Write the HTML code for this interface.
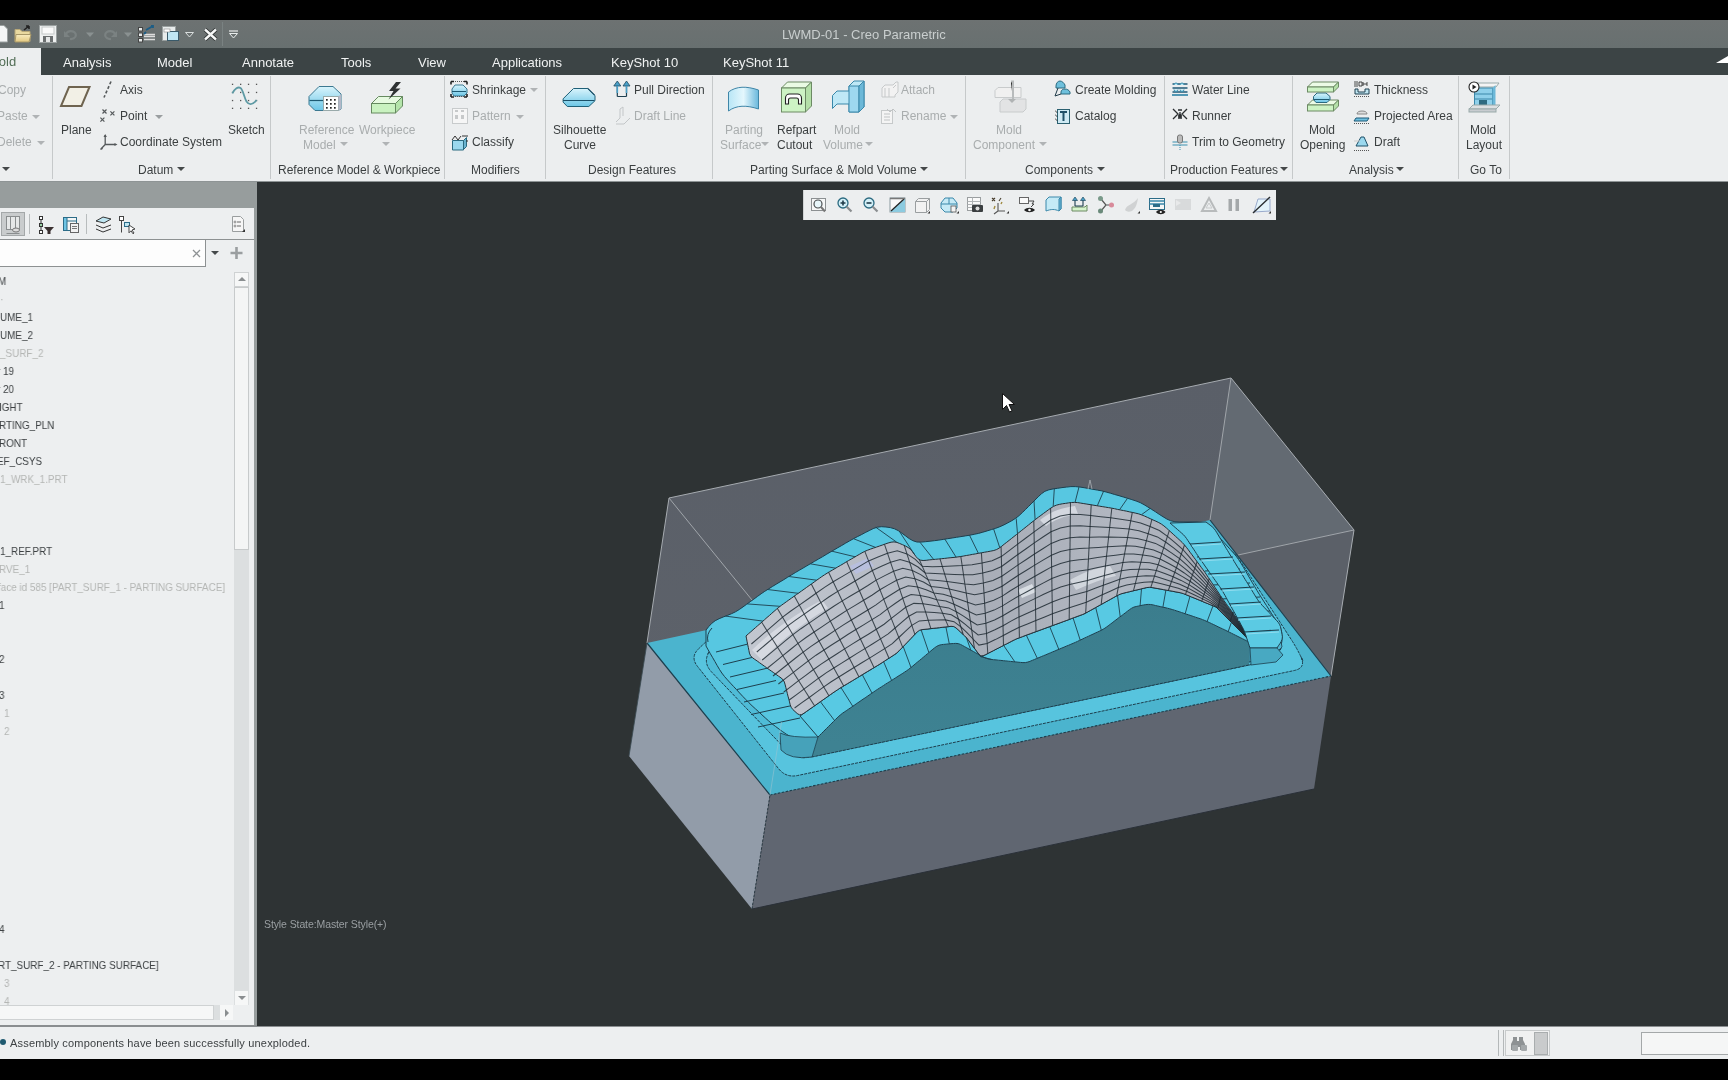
<!DOCTYPE html>
<html><head><meta charset="utf-8">
<style>
*{margin:0;padding:0;box-sizing:border-box}
html,body{width:1728px;height:1080px;overflow:hidden;background:#000;font-family:"Liberation Sans",sans-serif}
.a{position:absolute}
.t{will-change:transform;position:absolute;white-space:nowrap;font-size:12px;line-height:14px;color:#3b3f40}
.g{color:#a9adae}
.tab{position:absolute;white-space:nowrap;font-size:13px;line-height:16px;color:#f2f4f4;top:54px}
.sep{position:absolute;width:1px;background:#c9cccc;top:80px;height:98px}
.tr{position:absolute;white-space:nowrap;font-size:11px;line-height:13px;color:#3a3e40;left:0}
.tg{color:#b3b5b3}
#qat{left:0;top:20px;width:1728px;height:28px;background:linear-gradient(#6d7272,#687070)}
#tabs{left:0;top:48px;width:1728px;height:27px;background:#3c4445}
#ribbon{left:0;top:75px;width:1728px;height:107px;background:#eceeef}
#lhead{left:0;top:182px;width:257px;height:26px;background:#979d9d}
#lpanel{left:0;top:208px;width:254px;height:818px;background:#edeff0}
#lborder{left:254px;top:208px;width:3px;height:818px;background:#979d9d}
#vp{left:257px;top:182px;width:1471px;height:844px;background:#2e3334}
#status{left:0;top:1026px;width:1728px;height:33px;background:#edeff0}
</style></head>
<body>
<div id="qat" class="a"></div>
<div id="tabs" class="a"></div>
<div id="ribbon" class="a"></div>
<div id="lhead" class="a"></div>
<div class="a" style="left:0;top:181px;width:1728px;height:1px;background:#8e9495"></div>
<div id="lpanel" class="a"></div>
<div id="lborder" class="a"></div>
<div id="vp" class="a"></div>
<div id="status" class="a"></div>
<!--MODEL--><svg class="a" style="left:0;top:0" width="1728" height="1080" viewBox="0 0 1728 1080">
<defs><clipPath id="vpc"><rect x="257" y="181" width="1471" height="845"/></clipPath>
<linearGradient id="mg" x1="740" y1="0" x2="1250" y2="0" gradientUnits="userSpaceOnUse">
<stop offset="0" stop-color="#c2c7d0"/><stop offset="0.3" stop-color="#b6bbc5"/><stop offset="0.5" stop-color="#a9aeb8"/><stop offset="0.75" stop-color="#b2b7c1"/><stop offset="1" stop-color="#a0a5af"/></linearGradient>
<linearGradient id="wg" x1="0" y1="600" x2="0" y2="745" gradientUnits="userSpaceOnUse"><stop offset="0" stop-color="#3b7d8d"/><stop offset="1" stop-color="#3e8292"/></linearGradient>
<linearGradient id="bg" x1="0" y1="378" x2="0" y2="700" gradientUnits="userSpaceOnUse"><stop offset="0" stop-color="#5a5f68"/><stop offset="1" stop-color="#5d626a"/></linearGradient>
</defs>
<g clip-path="url(#vpc)">
<polygon points="669.0,498.0 1231.0,378.0 1354.0,530.0 1331.0,676.0 770.0,795.0 647.0,643.0" fill="url(#bg)"/>
<polygon points="1231.0,378.0 1354.0,530.0 1238.0,555.0 1210.0,520.0" fill="#636a72"/>
<polygon points="1238.0,555.0 1354.0,530.0 1331.0,676.0 1300.0,633.0" fill="#5b6068"/>
<polygon points="647.0,643.0 770.0,795.0 752.0,909.0 629.0,756.0" fill="#929ca9"/>
<polygon points="770.0,795.0 1331.0,676.0 1314.0,789.0 752.0,909.0" fill="#606671"/>
<polygon points="647.0,643.0 1210.0,520.0 1331.0,676.0 770.0,795.0" fill="#4bb4ce"/>
<polyline points="647.0,643.0 669.0,498.0 1231.0,378.0 1354.0,530.0 1331.0,676.0" fill="none" stroke="#a6abb0" stroke-width="1"/>
<line x1="1231" y1="378" x2="1210" y2="520" stroke="#a0a5aa" stroke-width="1"/>
<line x1="669" y1="498" x2="752" y2="600" stroke="#a0a5aa" stroke-width="1"/>
<line x1="1238" y1="555" x2="1354" y2="530" stroke="#a0a5aa" stroke-width="1"/>
<polyline points="770.0,795.0 1331.0,676.0" fill="none" stroke="#1d3f4e" stroke-width="1.1" stroke-dasharray="2.5,1.5"/>
<polyline points="1331.0,676.0 1210.0,520.0" fill="none" stroke="#1d3f4e" stroke-width="1.2"/>
<polyline points="647.0,643.0 770.0,795.0" fill="none" stroke="#1d3f4e" stroke-width="1.2"/>
<polyline points="629.0,756.0 647.0,643.0" fill="none" stroke="#3a4a52" stroke-width="0.8"/>
<polyline points="752.0,909.0 770.0,795.0" fill="none" stroke="#2a3a44" stroke-width="1" stroke-dasharray="2.5,1.5"/>
<polyline points="752.0,909.0 1314.0,789.0" fill="none" stroke="#2a3038" stroke-width="1"/>
<path d="M723.8 634.0 Q712.0 636.0 703.3 644.3 L698.7 648.7 Q690.0 657.0 697.5 666.4 L778.5 768.6 Q786.0 778.0 797.7 775.5 L1294.3 670.5 Q1306.0 668.0 1301.1 657.0 L1302.9 661.0 Q1298.0 650.0 1291.5 639.9 L1238.5 558.1 Q1232.0 548.0 1220.2 550.0 Z" fill="#57c4de" stroke="#1d3f4e" stroke-width="1" stroke-dasharray="3,1"/>
<path d="M729.8 639.7 Q716.0 642.0 708.0 653.5 L710.0 650.5 Q702.0 662.0 711.7 672.1 L786.3 749.9 Q796.0 760.0 809.7 757.1 L1259.3 662.9 Q1273.0 660.0 1281.1 648.6 L1274.9 657.4 Q1283.0 646.0 1275.5 634.2 L1233.5 567.8 Q1226.0 556.0 1212.2 558.3 Z" fill="#4fbcd7" stroke="#1d3f4e" stroke-width="1" stroke-dasharray="3,1"/>
<polygon points="706.0,630.0 708.8,626.5 711.8,623.3 715.2,620.7 719.1,618.7 723.2,617.0 727.4,615.4 731.5,613.7 735.5,611.8 739.3,609.5 743.0,606.9 746.6,604.3 750.2,601.7 753.9,599.1 757.5,596.4 761.1,593.8 764.8,591.3 768.6,588.9 772.4,586.5 776.2,584.2 780.0,581.9 783.9,579.6 787.7,577.2 791.5,574.9 795.3,572.6 799.2,570.3 803.0,568.1 806.9,565.8 810.8,563.5 814.6,561.3 818.5,559.0 822.4,556.8 826.2,554.5 830.1,552.2 833.9,550.0 837.8,547.7 841.7,545.5 845.5,543.2 849.4,541.0 853.3,538.8 857.3,536.7 861.3,534.7 865.2,532.6 869.2,530.6 873.2,528.6 877.3,527.2 881.5,526.7 885.9,527.0 890.3,527.6 894.5,528.8 898.4,530.7 902.0,533.3 905.6,535.9 909.2,538.6 912.9,540.7 916.9,542.0 921.1,542.1 925.5,541.7 930.0,541.2 934.4,540.7 938.9,540.1 943.3,539.4 947.7,538.7 952.1,538.0 956.5,537.3 961.0,536.6 965.4,535.9 969.8,535.2 974.2,534.3 978.5,533.4 982.8,532.2 987.1,530.9 991.4,529.6 995.7,528.3 999.9,526.7 1003.9,524.9 1007.9,522.8 1011.8,520.7 1015.6,518.3 1019.1,515.6 1022.3,512.6 1025.5,509.5 1028.7,506.3 1031.9,503.1 1035.0,500.0 1038.2,496.8 1041.4,493.8 1044.9,491.3 1048.9,489.8 1053.2,488.9 1057.6,488.3 1062.0,487.6 1066.5,487.1 1070.9,486.6 1075.3,486.6 1079.7,487.0 1084.1,487.7 1088.6,488.5 1093.0,489.3 1097.4,490.1 1101.8,490.9 1106.1,492.0 1110.4,493.2 1114.7,494.5 1119.0,495.7 1123.3,497.0 1127.6,498.3 1131.8,499.6 1136.1,501.0 1140.2,502.6 1144.1,504.7 1147.9,507.0 1151.7,509.4 1155.5,511.8 1159.2,514.3 1163.0,516.7 1166.8,519.0 1170.7,520.8 1174.9,521.7 1179.3,522.0 1183.8,522.0 1188.2,522.0 1192.7,522.0 1197.1,522.1 1201.4,522.7 1205.2,524.2 1208.6,526.8 1211.8,529.8 1215.0,533.0 1218.1,536.2 1221.2,539.4 1224.2,542.7 1227.2,546.0 1230.2,549.4 1233.2,552.7 1236.1,556.1 1238.7,559.7 1241.1,563.5 1243.4,567.3 1245.7,571.2 1247.9,575.0 1250.1,578.9 1252.4,582.8 1254.7,586.6 1257.0,590.5 1259.3,594.3 1261.7,598.1 1264.1,601.9 1266.5,605.6 1268.9,609.4 1271.3,613.2 1273.7,616.9 1276.2,620.6 1278.6,624.4 1280.6,628.2 1281.6,632.4 1282.0,636.8 1281.9,641.2 1281.1,645.3 1279.3,649.0 1276.5,652.3 1273.0,654.9 1269.1,656.7 1264.9,658.0 1260.6,659.1 1256.2,660.2 1251.9,661.2 1247.5,662.2 1243.1,663.1 1238.7,663.9 1234.3,664.7 1229.9,665.5 1225.5,666.3 1221.1,667.1 1216.7,667.9 1212.3,668.7 1207.9,669.5 1203.5,670.3 1199.1,671.1 1194.7,671.8 1190.3,672.6 1185.9,673.4 1181.5,674.2 1177.1,675.0 1172.7,675.8 1168.3,676.6 1163.9,677.4 1159.5,678.2 1155.1,679.0 1150.7,679.8 1146.3,680.6 1141.9,681.4 1137.5,682.2 1133.1,683.0 1128.7,683.8 1124.3,684.6 1119.9,685.4 1115.5,686.2 1111.1,687.0 1106.7,687.8 1102.3,688.6 1097.9,689.4 1093.4,690.2 1089.0,691.0 1084.6,691.8 1080.2,692.6 1075.8,693.4 1071.4,694.2 1067.0,695.0 1062.6,695.8 1058.2,696.6 1053.8,697.4 1049.4,698.2 1045.0,699.0 1040.6,699.8 1036.2,700.6 1031.8,701.4 1027.4,702.2 1023.0,703.0 1018.6,703.8 1014.2,704.6 1009.8,705.4 1005.4,706.2 1001.0,707.0 996.6,707.8 992.2,708.6 987.8,709.4 983.4,710.2 979.0,711.0 974.6,711.8 970.2,712.6 965.8,713.4 961.4,714.2 957.0,715.0 952.6,715.8 948.2,716.6 943.8,717.4 939.4,718.2 935.0,719.0 930.6,719.8 926.2,720.6 921.8,721.4 917.4,722.2 912.9,723.0 908.5,723.8 904.1,724.6 899.7,725.4 895.3,726.2 890.9,727.0 886.5,727.8 882.1,728.6 877.7,729.4 873.3,730.1 868.9,730.9 864.5,731.7 860.1,732.5 855.7,733.3 851.3,734.1 846.9,734.9 842.5,735.7 838.1,736.5 833.7,737.3 829.3,738.1 824.9,738.9 820.5,739.7 816.1,740.5 811.7,741.1 807.3,741.2 803.0,740.5 798.7,739.4 794.4,738.1 790.3,736.5 786.5,734.3 782.8,731.8 779.2,729.2 775.6,726.5 772.0,723.8 768.6,720.9 765.3,717.9 762.0,714.9 758.7,711.8 755.4,708.8 752.1,705.8 748.9,702.7 745.8,699.5 742.7,696.3 739.6,693.0 736.6,689.7 733.5,686.4 730.5,683.2 727.5,679.9 724.5,676.5 721.8,673.0 719.4,669.3 717.1,665.4 714.9,661.5 712.7,657.7 710.4,653.8 708.2,649.9 706.0,646.0" fill="#57c7e1" stroke="#1d3f4e" stroke-width="1"/>
<line x1="716" y1="652.0" x2="752" y2="643.0" stroke="#1d3f4e" stroke-width="1"/>
<line x1="723" y1="664.5" x2="760" y2="655.5" stroke="#1d3f4e" stroke-width="1"/>
<line x1="730" y1="677.0" x2="768" y2="668.0" stroke="#1d3f4e" stroke-width="1"/>
<line x1="737" y1="689.5" x2="776" y2="680.5" stroke="#1d3f4e" stroke-width="1"/>
<line x1="744" y1="702.0" x2="784" y2="693.0" stroke="#1d3f4e" stroke-width="1"/>
<line x1="751" y1="714.5" x2="792" y2="705.5" stroke="#1d3f4e" stroke-width="1"/>
<line x1="758" y1="727.0" x2="800" y2="718.0" stroke="#1d3f4e" stroke-width="1"/>
<path d="M712 628q-6 6 -4 14" fill="none" stroke="#1d3f4e"/>
<line x1="1189" y1="543" x2="1220" y2="541" stroke="#1d3f4e" stroke-width="1.1"/>
<line x1="1197" y1="557" x2="1230" y2="555" stroke="#1d3f4e" stroke-width="1.1"/>
<line x1="1205" y1="571" x2="1240" y2="569" stroke="#1d3f4e" stroke-width="1.1"/>
<line x1="1213" y1="585" x2="1250" y2="583" stroke="#1d3f4e" stroke-width="1.1"/>
<line x1="1221" y1="599" x2="1260" y2="597" stroke="#1d3f4e" stroke-width="1.1"/>
<line x1="1229" y1="613" x2="1270" y2="611" stroke="#1d3f4e" stroke-width="1.1"/>
<line x1="1237" y1="627" x2="1280" y2="625" stroke="#1d3f4e" stroke-width="1.1"/>
<polygon points="1249.0,642.0 1280.0,636.0 1282.0,647.0 1273.0,656.0 1249.0,662.0" fill="#4fb4cf" stroke="#1d3f4e" stroke-width="0.8"/>
<polygon points="818.0,737.0 819.7,735.3 821.5,733.5 823.2,731.8 825.0,730.0 826.7,728.3 828.4,726.6 830.2,724.8 831.9,723.1 833.6,721.4 835.4,719.6 837.1,717.9 838.9,716.2 840.8,714.6 842.7,713.1 844.8,711.7 846.8,710.4 848.8,709.0 850.9,707.6 852.9,706.2 854.9,704.8 856.9,703.4 859.0,702.0 861.0,700.6 863.0,699.2 865.1,697.9 867.1,696.5 869.1,695.1 871.1,693.7 873.2,692.3 875.2,690.9 877.3,689.5 879.3,688.2 881.4,686.9 883.5,685.5 885.5,684.2 887.6,682.9 889.7,681.6 891.8,680.3 893.8,679.0 895.9,677.7 898.0,676.3 900.1,675.0 902.2,673.7 904.2,672.4 906.3,671.0 908.3,669.6 910.2,668.1 912.1,666.6 914.0,665.0 915.9,663.4 917.8,661.8 919.7,660.3 921.6,658.7 923.5,657.1 925.4,655.5 927.2,654.0 929.1,652.4 931.0,650.8 932.9,649.2 934.8,647.7 936.8,646.3 938.9,645.3 941.2,644.7 943.6,644.4 946.1,644.2 948.5,643.9 951.0,643.7 953.4,643.5 955.8,643.4 958.2,643.6 960.4,644.4 962.6,645.5 964.7,646.7 966.9,647.9 969.0,649.1 971.2,650.3 973.4,651.5 975.5,652.7 977.7,653.8 979.8,655.0 982.0,656.2 984.1,657.4 986.4,658.3 988.7,659.0 991.1,659.4 993.5,659.7 996.0,659.9 998.4,660.2 1000.9,660.4 1003.3,660.7 1005.7,660.9 1008.2,661.2 1010.6,661.4 1013.1,661.7 1015.5,661.9 1018.0,662.2 1020.4,662.4 1022.9,662.6 1025.3,662.6 1027.6,662.1 1029.9,661.4 1032.2,660.4 1034.4,659.5 1036.7,658.5 1039.0,657.6 1041.3,656.6 1043.5,655.7 1045.8,654.8 1048.1,653.8 1050.3,652.9 1052.6,651.9 1054.9,651.0 1057.1,650.0 1059.4,649.1 1061.7,648.1 1064.0,647.2 1066.2,646.2 1068.5,645.3 1070.8,644.3 1073.0,643.4 1075.3,642.4 1077.5,641.4 1079.7,640.3 1082.0,639.3 1084.2,638.2 1086.4,637.2 1088.6,636.2 1090.9,635.1 1093.1,634.1 1095.3,633.0 1097.6,632.0 1099.8,631.0 1102.0,629.9 1104.1,628.7 1106.2,627.3 1108.1,625.9 1110.1,624.4 1112.1,622.9 1114.0,621.4 1116.0,619.9 1117.9,618.4 1119.9,616.9 1121.9,615.5 1123.8,614.0 1125.8,612.5 1127.7,611.0 1129.7,609.5 1131.7,608.2 1133.9,607.1 1136.2,606.5 1138.6,606.0 1141.0,605.5 1143.4,605.0 1145.8,604.6 1148.2,604.4 1150.7,604.5 1153.1,604.9 1155.4,605.5 1157.8,606.0 1160.2,606.6 1162.6,607.1 1165.0,607.6 1167.4,608.2 1169.8,608.8 1172.2,609.5 1174.5,610.2 1176.9,611.0 1179.2,611.7 1181.5,612.5 1183.9,613.3 1186.2,614.1 1188.5,614.8 1190.9,615.6 1193.2,616.4 1195.5,617.2 1197.9,618.0 1200.2,618.7 1202.5,619.6 1204.8,620.5 1207.0,621.5 1209.3,622.5 1211.5,623.6 1213.7,624.6 1215.9,625.7 1218.1,626.8 1220.3,627.8 1222.6,628.9 1224.8,629.9 1227.0,631.0 1229.2,632.1 1231.4,633.2 1233.6,634.3 1235.8,635.4 1238.0,636.5 1240.2,637.6 1242.4,638.7 1244.6,639.8 1246.8,640.9 1249.0,642.0 1249.0,665.0 812.0,757.0" fill="url(#wg)"/>
<path d="M780 733Q790 738 818 737L812 757Q790 760 781 750Z" fill="#46a2ba" stroke="#1d3f4e" stroke-width="0.8"/>
<path d="M1249 665L812 757" stroke="#1d3f4e" stroke-width="1" stroke-dasharray="3,1"/>
<polygon points="818.0,737.0 819.7,735.3 821.5,733.5 823.2,731.8 825.0,730.0 826.7,728.3 828.4,726.6 830.2,724.8 831.9,723.1 833.6,721.4 835.4,719.6 837.1,717.9 838.9,716.2 840.8,714.6 842.7,713.1 844.8,711.7 846.8,710.4 848.8,709.0 850.9,707.6 852.9,706.2 854.9,704.8 856.9,703.4 859.0,702.0 861.0,700.6 863.0,699.2 865.1,697.9 867.1,696.5 869.1,695.1 871.1,693.7 873.2,692.3 875.2,690.9 877.3,689.5 879.3,688.2 881.4,686.9 883.5,685.5 885.5,684.2 887.6,682.9 889.7,681.6 891.8,680.3 893.8,679.0 895.9,677.7 898.0,676.3 900.1,675.0 902.2,673.7 904.2,672.4 906.3,671.0 908.3,669.6 910.2,668.1 912.1,666.6 914.0,665.0 915.9,663.4 917.8,661.8 919.7,660.3 921.6,658.7 923.5,657.1 925.4,655.5 927.2,654.0 929.1,652.4 931.0,650.8 932.9,649.2 934.8,647.7 936.8,646.3 938.9,645.3 941.2,644.7 943.6,644.4 946.1,644.2 948.5,643.9 951.0,643.7 953.4,643.5 955.8,643.4 958.2,643.6 960.4,644.4 962.6,645.5 964.7,646.7 966.9,647.9 969.0,649.1 971.2,650.3 973.4,651.5 975.5,652.7 977.7,653.8 979.8,655.0 982.0,656.2 984.1,657.4 986.4,658.3 988.7,659.0 991.1,659.4 993.5,659.7 996.0,659.9 998.4,660.2 1000.9,660.4 1003.3,660.7 1005.7,660.9 1008.2,661.2 1010.6,661.4 1013.1,661.7 1015.5,661.9 1018.0,662.2 1020.4,662.4 1022.9,662.6 1025.3,662.6 1027.6,662.1 1029.9,661.4 1032.2,660.4 1034.4,659.5 1036.7,658.5 1039.0,657.6 1041.3,656.6 1043.5,655.7 1045.8,654.8 1048.1,653.8 1050.3,652.9 1052.6,651.9 1054.9,651.0 1057.1,650.0 1059.4,649.1 1061.7,648.1 1064.0,647.2 1066.2,646.2 1068.5,645.3 1070.8,644.3 1073.0,643.4 1075.3,642.4 1077.5,641.4 1079.7,640.3 1082.0,639.3 1084.2,638.2 1086.4,637.2 1088.6,636.2 1090.9,635.1 1093.1,634.1 1095.3,633.0 1097.6,632.0 1099.8,631.0 1102.0,629.9 1104.1,628.7 1106.2,627.3 1108.1,625.9 1110.1,624.4 1112.1,622.9 1114.0,621.4 1116.0,619.9 1117.9,618.4 1119.9,616.9 1121.9,615.5 1123.8,614.0 1125.8,612.5 1127.7,611.0 1129.7,609.5 1131.7,608.2 1133.9,607.1 1136.2,606.5 1138.6,606.0 1141.0,605.5 1143.4,605.0 1145.8,604.6 1148.2,604.4 1150.7,604.5 1153.1,604.9 1155.4,605.5 1157.8,606.0 1160.2,606.6 1162.6,607.1 1165.0,607.6 1167.4,608.2 1169.8,608.8 1172.2,609.5 1174.5,610.2 1176.9,611.0 1179.2,611.7 1181.5,612.5 1183.9,613.3 1186.2,614.1 1188.5,614.8 1190.9,615.6 1193.2,616.4 1195.5,617.2 1197.9,618.0 1200.2,618.7 1202.5,619.6 1204.8,620.5 1207.0,621.5 1209.3,622.5 1211.5,623.6 1213.7,624.6 1215.9,625.7 1218.1,626.8 1220.3,627.8 1222.6,628.9 1224.8,629.9 1227.0,631.0 1229.2,632.1 1231.4,633.2 1233.6,634.3 1235.8,635.4 1238.0,636.5 1240.2,637.6 1242.4,638.7 1244.6,639.8 1246.8,640.9 1249.0,642.0 1249.0,640.0 1216.0,607.0 1182.0,593.0 1149.0,587.0 1120.0,594.0 1084.0,614.0 1016.0,639.0 981.0,657.0 966.0,637.0 954.0,626.0 919.0,630.0 897.0,653.0 880.0,664.0 837.0,690.0 800.0,716.0 818.0,737.0" fill="#58c9e3" stroke="#1d3f4e" stroke-width="1"/>
<polygon points="746.0,636.0 748.3,633.9 750.7,631.9 753.0,629.8 755.3,627.8 757.7,625.7 760.0,623.7 762.4,621.6 764.7,619.6 767.0,617.5 769.4,615.5 771.7,613.4 774.0,611.4 776.4,609.3 778.8,607.3 781.3,605.4 783.8,603.6 786.3,601.8 788.8,600.0 791.4,598.2 793.9,596.4 796.4,594.6 799.0,592.8 801.5,591.0 804.1,589.2 806.6,587.4 809.1,585.6 811.7,583.8 814.2,582.0 816.7,580.2 819.3,578.4 821.8,576.6 824.4,574.9 827.1,573.2 829.7,571.6 832.4,570.1 835.1,568.5 837.8,566.9 840.5,565.4 843.2,563.8 845.8,562.2 848.5,560.6 851.2,559.1 853.9,557.5 856.6,555.9 859.3,554.4 862.0,552.8 864.7,551.4 867.6,550.2 870.5,549.1 873.4,548.1 876.4,547.1 879.3,546.1 882.2,545.1 885.2,544.0 888.1,543.0 891.1,542.2 894.0,541.9 896.9,542.4 899.7,543.5 902.6,544.7 905.4,546.0 908.1,547.5 910.4,549.3 912.4,551.6 914.2,554.1 916.0,556.6 918.0,558.8 920.3,560.1 923.1,560.5 926.2,560.3 929.2,559.9 932.3,559.6 935.4,559.3 938.5,559.0 941.6,558.7 944.7,558.4 947.8,558.0 950.9,557.7 954.0,557.4 957.1,557.0 960.2,556.6 963.2,556.1 966.3,555.5 969.4,555.0 972.4,554.4 975.5,553.9 978.5,553.3 981.6,552.8 984.7,552.2 987.7,551.7 990.8,551.1 993.8,550.5 996.7,549.5 999.3,548.0 1001.8,546.2 1004.2,544.2 1006.7,542.3 1009.1,540.4 1011.6,538.4 1014.0,536.5 1016.4,534.6 1018.9,532.6 1021.3,530.7 1023.7,528.8 1026.2,526.8 1028.6,524.9 1031.0,522.9 1033.5,521.0 1035.9,519.1 1038.4,517.2 1040.9,515.4 1043.4,513.5 1045.9,511.7 1048.4,509.8 1051.0,508.0 1053.5,506.4 1056.3,505.2 1059.3,504.4 1062.3,503.8 1065.4,503.4 1068.5,502.9 1071.5,502.5 1074.6,502.4 1077.7,502.6 1080.7,503.1 1083.8,503.6 1086.9,504.1 1090.0,504.6 1093.0,505.1 1096.1,505.6 1099.2,506.1 1102.2,506.6 1105.3,507.1 1108.4,507.6 1111.4,508.1 1114.5,508.7 1117.5,509.4 1120.6,510.0 1123.6,510.6 1126.7,511.2 1129.7,511.9 1132.8,512.5 1135.8,513.2 1138.8,513.9 1141.7,514.9 1144.6,516.1 1147.5,517.4 1150.3,518.7 1153.1,520.0 1155.9,521.2 1158.8,522.6 1161.4,524.1 1163.9,525.9 1166.3,527.9 1168.6,530.0 1170.9,532.1 1173.2,534.2 1175.5,536.3 1177.8,538.4 1180.1,540.5 1182.3,542.6 1184.4,544.9 1186.4,547.3 1188.3,549.8 1190.1,552.3 1192.0,554.8 1193.8,557.3 1195.7,559.8 1197.5,562.3 1199.4,564.8 1201.2,567.3 1203.1,569.8 1204.9,572.3 1206.6,574.9 1208.3,577.5 1210.1,580.1 1211.8,582.7 1213.5,585.3 1215.2,587.8 1217.0,590.4 1218.7,593.0 1220.4,595.6 1222.2,598.2 1224.0,600.7 1225.8,603.2 1227.6,605.7 1229.5,608.3 1231.3,610.8 1233.1,613.3 1234.9,615.8 1236.7,618.4 1238.4,621.0 1240.0,623.7 1241.5,626.4 1243.0,629.1 1244.5,631.8 1246.0,634.5 1247.5,637.3 1249.0,640.0 1216.0,607.0 1213.3,605.9 1210.6,604.8 1207.9,603.7 1205.2,602.6 1202.5,601.5 1199.8,600.3 1197.1,599.2 1194.4,598.1 1191.7,597.0 1189.0,595.9 1186.3,594.8 1183.6,593.7 1180.9,592.9 1178.0,592.3 1175.2,591.8 1172.3,591.2 1169.4,590.7 1166.6,590.2 1163.7,589.7 1160.8,589.1 1157.9,588.6 1155.1,588.1 1152.2,587.6 1149.4,587.3 1146.5,587.6 1143.7,588.3 1140.8,589.0 1138.0,589.7 1135.2,590.3 1132.3,591.0 1129.5,591.7 1126.7,592.4 1123.8,593.1 1121.0,593.9 1118.4,595.0 1115.8,596.3 1113.3,597.7 1110.7,599.2 1108.2,600.6 1105.6,602.0 1103.1,603.4 1100.5,604.8 1098.0,606.2 1095.4,607.7 1092.9,609.1 1090.3,610.5 1087.8,611.9 1085.2,613.3 1082.6,614.5 1079.8,615.5 1077.1,616.5 1074.4,617.5 1071.6,618.5 1068.9,619.6 1066.2,620.6 1063.4,621.6 1060.7,622.6 1058.0,623.6 1055.2,624.6 1052.5,625.6 1049.7,626.6 1047.0,627.6 1044.3,628.6 1041.5,629.6 1038.8,630.6 1036.1,631.6 1033.3,632.6 1030.6,633.6 1027.9,634.6 1025.1,635.6 1022.4,636.7 1019.7,637.7 1016.9,638.7 1014.3,639.9 1011.7,641.2 1009.1,642.6 1006.5,643.9 1003.9,645.2 1001.3,646.6 998.7,647.9 996.1,649.2 993.5,650.6 990.9,651.9 988.4,653.2 985.8,654.6 983.2,655.7 980.9,655.9 979.0,654.3 977.2,652.0 975.5,649.6 973.7,647.3 972.0,645.0 970.2,642.6 968.5,640.3 966.7,638.0 964.7,635.9 962.6,633.9 960.4,631.9 958.3,629.9 956.1,628.0 953.8,626.6 951.1,626.3 948.2,626.7 945.3,627.0 942.4,627.3 939.5,627.7 936.6,628.0 933.7,628.3 930.8,628.6 927.9,629.0 925.0,629.3 922.1,629.6 919.4,630.4 917.2,632.0 915.1,634.0 913.1,636.2 911.1,638.3 909.1,640.4 907.1,642.5 905.1,644.6 903.0,646.7 901.0,648.8 899.0,650.9 896.9,652.9 894.5,654.6 892.1,656.2 889.7,657.8 887.2,659.3 884.8,660.9 882.3,662.5 879.9,664.1 877.4,665.6 874.9,667.1 872.4,668.6 869.9,670.1 867.4,671.6 864.9,673.1 862.4,674.6 859.9,676.2 857.4,677.7 854.9,679.2 852.4,680.7 849.9,682.2 847.4,683.7 844.9,685.2 842.4,686.7 839.9,688.2 837.5,689.8 835.1,691.4 832.7,693.0 830.3,694.7 827.9,696.4 825.5,698.1 823.1,699.8 820.7,701.4 818.4,703.1 816.0,704.8 813.6,706.5 811.2,708.1 808.8,709.8 806.4,711.5 804.0,713.2 801.7,714.6 799.4,714.8 797.2,713.5 795.0,711.5 792.9,709.6 791.2,707.3 790.2,704.7 789.5,701.9 788.8,699.0 788.0,696.2 787.3,693.4 786.6,690.5 785.9,687.7 785.2,684.9 784.4,682.1 783.0,679.7 781.0,677.9 778.6,676.2 776.2,674.5 773.8,672.8 771.4,671.1 769.1,669.5 766.7,667.8 764.3,666.1 761.9,664.4 759.5,662.7 757.2,661.0 754.8,659.4 752.4,657.7 750.5,655.7 749.4,653.1 748.9,650.3 748.3,647.4 747.7,644.6 747.1,641.7 746.6,638.9 746.0,636.0" fill="url(#mg)" stroke="#243038" stroke-width="1"/>
<path d="M752 650c20-20 50-40 70-50l6 8c-20 12-45 30-66 52z" fill="#dfe3ea" opacity="0.7"/>
<path d="M1040 520c10-8 20-12 35-14l3 8c-14 2-24 6-32 12z" fill="#dde1e8" opacity="0.8"/>
<path d="M1070 580c14-8 26-12 40-14l6 10c-12 2-26 8-40 14z" fill="#e0e4ea" opacity="0.7"/>
<path d="M850 566l18-8 6 8-18 8z" fill="#b8bfe0" opacity="0.9"/>
<path d="M1018 590l14-6 4 8-14 6z" fill="#e4e8ee" opacity="0.8"/>
<polyline points="751.4,644.0 759.2,637.3 767.0,630.6 774.8,623.8 782.6,617.2 790.8,611.0 799.3,605.1 807.7,599.2 816.1,593.3 824.5,587.4 833.2,581.8 842.0,576.6 850.9,571.4 859.8,566.1 868.6,560.9 878.0,557.0 887.5,553.3 897.3,550.7 907.0,553.9 915.3,559.4 922.3,566.3 932.3,566.8 942.4,566.4 952.3,566.1 962.2,565.6 972.0,564.7 982.0,562.9 992.1,560.8 1001.3,556.6 1009.5,550.3 1017.7,544.1 1025.9,538.0 1034.1,531.8 1042.4,525.9 1050.8,520.0 1060.2,516.1 1070.3,514.3 1080.5,514.4 1090.6,515.6 1100.7,516.7 1110.7,517.8 1120.7,519.3 1130.7,520.7 1140.6,522.9 1150.1,526.5 1159.4,530.5 1167.5,536.3 1175.3,542.8 1182.9,549.5 1189.5,557.2 1195.9,565.0 1202.3,572.9 1208.4,581.0 1214.5,589.1 1220.5,597.4 1226.5,605.7 1232.7,613.9 1238.6,622.3 1243.8,631.1 1249.0,640.0" fill="none" stroke="#1f2a32" stroke-width="1.05" opacity="0.85"/>
<polyline points="756.8,652.0 764.5,645.5 772.3,638.9 780.0,632.4 787.7,625.9 795.9,619.9 804.2,614.1 812.5,608.3 820.8,602.6 829.2,596.8 837.7,591.4 846.4,586.2 855.1,581.0 863.8,575.8 872.4,570.5 881.4,566.3 890.6,562.3 900.1,559.5 909.6,562.2 918.0,567.0 925.2,573.0 935.1,573.6 944.7,574.0 954.2,574.4 963.5,574.8 972.8,574.7 982.7,572.9 992.5,570.6 1001.6,566.5 1009.7,560.5 1017.9,554.5 1026.1,548.7 1034.3,542.9 1042.6,537.3 1051.0,531.7 1060.3,527.9 1070.2,526.0 1080.2,525.8 1090.1,526.4 1099.9,526.9 1109.7,527.5 1119.4,528.3 1129.2,529.1 1138.9,530.7 1148.2,533.7 1157.4,536.9 1165.6,542.0 1173.6,547.9 1181.3,554.1 1188.1,561.0 1194.8,568.2 1201.4,575.6 1207.7,583.2 1214.0,590.9 1220.2,598.7 1226.3,606.7 1232.4,614.7 1238.4,622.9 1243.7,631.4 1249.0,640.0" fill="none" stroke="#1f2a32" stroke-width="1.05" opacity="0.85"/>
<polyline points="762.2,660.0 769.9,653.6 777.5,647.3 785.2,640.9 792.9,634.6 800.9,628.7 809.1,623.1 817.4,617.4 825.6,611.8 833.8,606.2 842.3,600.9 850.8,595.8 859.4,590.7 867.9,585.5 876.2,580.1 884.8,575.6 893.6,571.3 902.8,568.3 912.3,570.5 920.7,574.6 928.1,579.7 937.8,580.5 947.0,581.5 956.0,582.8 964.9,584.0 973.7,584.8 983.3,583.0 992.9,580.5 1001.8,576.3 1009.9,570.6 1018.1,564.9 1026.3,559.5 1034.5,554.0 1042.8,548.7 1051.2,543.4 1060.4,539.7 1070.1,537.7 1079.9,537.1 1089.5,537.3 1099.1,537.1 1108.6,537.1 1118.1,537.2 1127.6,537.4 1137.1,538.5 1146.4,540.8 1155.5,543.4 1163.8,547.7 1171.8,553.1 1179.6,558.6 1186.7,564.9 1193.6,571.5 1200.4,578.4 1207.0,585.5 1213.5,592.6 1219.8,599.9 1226.0,607.7 1232.2,615.5 1238.1,623.5 1243.6,631.7 1249.0,640.0" fill="none" stroke="#1f2a32" stroke-width="1.05" opacity="0.85"/>
<polyline points="767.6,668.0 775.2,661.8 782.8,655.7 790.4,649.5 798.0,643.3 806.0,637.5 814.1,632.0 822.2,626.6 830.3,621.1 838.5,615.7 846.8,610.4 855.2,605.4 863.6,600.3 871.9,595.2 879.9,589.7 888.3,584.9 896.6,580.3 905.6,577.0 915.0,578.8 923.4,582.1 931.0,586.4 940.5,587.4 949.3,589.1 957.9,591.1 966.2,593.1 974.6,594.8 983.9,593.1 993.3,590.3 1002.1,586.2 1010.1,580.7 1018.3,575.3 1026.5,570.2 1034.7,565.1 1043.0,560.1 1051.4,555.2 1060.5,551.5 1070.0,549.4 1079.5,548.4 1089.0,548.1 1098.3,547.4 1107.6,546.7 1116.8,546.2 1126.0,545.8 1135.4,546.2 1144.5,547.9 1153.6,549.9 1161.9,553.4 1170.1,558.2 1178.0,563.2 1185.3,568.8 1192.4,574.8 1199.4,581.2 1206.2,587.7 1213.0,594.3 1219.5,601.2 1225.7,608.8 1231.9,616.3 1237.9,624.0 1243.5,632.0 1249.0,640.0" fill="none" stroke="#1f2a32" stroke-width="1.05" opacity="0.85"/>
<polyline points="773.0,676.0 780.5,670.0 788.1,664.0 795.6,658.0 803.2,652.1 811.0,646.4 819.0,641.0 827.1,635.7 835.1,630.4 843.1,625.1 851.3,620.0 859.6,615.0 867.8,610.0 876.0,604.9 883.7,599.2 891.7,594.2 899.7,589.3 908.3,585.8 917.6,587.1 926.1,589.7 933.9,593.1 943.2,594.2 951.6,596.7 959.8,599.4 967.6,602.3 975.5,604.9 984.6,603.2 993.7,600.2 1002.3,596.1 1010.3,590.8 1018.5,585.7 1026.7,581.0 1034.9,576.2 1043.3,571.5 1051.6,566.9 1060.5,563.4 1069.9,561.0 1079.2,559.7 1088.5,558.9 1097.5,557.6 1106.5,556.3 1115.5,555.2 1124.5,554.1 1133.6,554.0 1142.7,555.1 1151.7,556.3 1160.1,559.0 1168.3,563.3 1176.4,567.7 1183.9,572.7 1191.3,578.1 1198.5,583.9 1205.5,590.0 1212.5,596.0 1219.2,602.4 1225.4,609.8 1231.6,617.2 1237.7,624.6 1243.4,632.3 1249.0,640.0" fill="none" stroke="#1f2a32" stroke-width="1.05" opacity="0.85"/>
<polyline points="778.4,684.0 785.9,678.2 793.4,672.4 800.8,666.6 808.3,660.8 816.0,655.2 824.0,650.0 831.9,644.8 839.9,639.7 847.8,634.5 855.9,629.5 864.0,624.6 872.0,619.6 880.1,614.6 887.5,608.8 895.1,603.5 902.7,598.3 911.1,594.6 920.3,595.4 928.8,597.3 936.8,599.8 945.9,601.1 954.0,604.2 961.6,607.8 968.9,611.5 976.3,614.9 985.2,613.2 994.1,610.1 1002.5,605.9 1010.5,600.9 1018.6,596.1 1026.9,591.7 1035.2,587.3 1043.5,582.9 1051.8,578.6 1060.6,575.2 1069.7,572.7 1078.9,571.1 1087.9,569.7 1096.7,567.8 1105.4,565.9 1114.2,564.2 1122.9,562.5 1131.9,561.8 1140.9,562.2 1149.8,562.8 1158.2,564.7 1166.6,568.4 1174.8,572.3 1182.5,576.6 1190.1,581.3 1197.5,586.7 1204.8,592.2 1212.0,597.7 1218.9,603.7 1225.1,610.8 1231.3,618.0 1237.4,625.2 1243.2,632.6 1249.0,640.0" fill="none" stroke="#1f2a32" stroke-width="1.05" opacity="0.85"/>
<polyline points="783.8,692.0 791.2,686.4 798.6,680.7 806.1,675.1 813.5,669.5 821.1,664.1 828.9,659.0 836.7,654.0 844.6,648.9 852.5,643.9 860.4,639.0 868.4,634.2 876.3,629.3 884.1,624.2 891.3,618.4 898.5,612.8 905.7,607.3 913.8,603.4 922.9,603.7 931.5,604.9 939.7,606.5 948.6,607.9 956.3,611.8 963.5,616.1 970.3,620.7 977.2,625.0 985.9,623.3 994.5,619.9 1002.8,615.8 1010.8,611.0 1018.8,606.5 1027.1,602.4 1035.4,598.4 1043.7,594.3 1052.0,590.4 1060.7,587.0 1069.6,584.4 1078.5,582.4 1087.4,580.5 1095.9,578.1 1104.4,575.6 1112.9,573.2 1121.3,570.8 1130.2,569.5 1139.0,569.3 1147.9,569.3 1156.4,570.4 1164.8,573.5 1173.1,576.8 1181.1,580.4 1188.9,584.6 1196.5,589.5 1204.0,594.4 1211.5,599.4 1218.6,605.0 1224.8,611.9 1231.1,618.8 1237.2,625.8 1243.1,632.9 1249.0,640.0" fill="none" stroke="#1f2a32" stroke-width="1.05" opacity="0.85"/>
<polyline points="789.2,700.0 796.6,694.6 803.9,689.1 811.3,683.7 818.6,678.2 826.1,672.9 833.8,668.0 841.6,663.1 849.4,658.2 857.1,653.4 864.9,648.6 872.8,643.8 880.5,638.9 888.2,633.9 895.1,628.0 901.9,622.1 908.8,616.3 916.6,612.1 925.6,612.0 934.2,612.5 942.6,613.2 951.3,614.8 958.6,619.3 965.3,624.4 971.7,629.8 978.1,635.0 986.5,633.4 994.9,629.8 1003.0,625.7 1011.0,621.1 1019.0,616.9 1027.3,613.2 1035.6,609.5 1043.9,605.8 1052.2,602.1 1060.8,598.8 1069.5,596.1 1078.2,593.7 1086.8,591.4 1095.1,588.3 1103.3,585.2 1111.6,582.2 1119.8,579.2 1128.4,577.3 1137.2,576.5 1146.0,575.7 1154.5,576.1 1163.1,578.7 1171.5,581.4 1179.7,584.3 1187.8,587.9 1195.6,592.3 1203.3,596.7 1211.0,601.1 1218.3,606.2 1224.6,612.9 1230.8,619.6 1237.0,626.3 1243.0,633.2 1249.0,640.0" fill="none" stroke="#1f2a32" stroke-width="1.05" opacity="0.85"/>
<polyline points="794.6,708.0 801.9,702.7 809.2,697.5 816.5,692.2 823.8,686.9 831.2,681.8 838.8,677.0 846.4,672.2 854.1,667.5 861.8,662.8 869.5,658.1 877.1,653.4 884.7,648.6 892.3,643.6 898.8,637.5 905.3,631.4 911.8,625.3 919.3,620.9 928.2,620.3 936.9,620.1 945.5,619.9 954.0,621.7 960.9,626.9 967.2,632.8 973.0,639.0 978.9,645.1 987.1,643.4 995.3,639.6 1003.3,635.5 1011.2,631.3 1019.2,627.3 1027.5,623.9 1035.8,620.5 1044.1,617.2 1052.4,613.8 1060.9,610.7 1069.4,607.7 1077.9,605.0 1086.3,602.2 1094.3,598.5 1102.3,594.8 1110.2,591.2 1118.2,587.5 1126.7,585.0 1135.4,583.6 1144.0,582.2 1152.7,581.8 1161.3,583.8 1169.9,585.9 1178.3,588.2 1186.6,591.2 1194.6,595.0 1202.6,598.9 1210.5,602.8 1218.0,607.5 1224.3,613.9 1230.5,620.4 1236.7,626.9 1242.9,633.5 1249.0,640.0" fill="none" stroke="#1f2a32" stroke-width="1.05" opacity="0.85"/>
<line x1="761.7" y1="622.2" x2="814.5" y2="705.8" stroke="#1f2a32" stroke-width="1.05" opacity="0.8"/>
<line x1="777.4" y1="608.4" x2="828.9" y2="695.7" stroke="#1f2a32" stroke-width="1.05" opacity="0.8"/>
<line x1="794.3" y1="596.1" x2="843.7" y2="685.9" stroke="#1f2a32" stroke-width="1.05" opacity="0.8"/>
<line x1="811.3" y1="584.0" x2="858.9" y2="676.8" stroke="#1f2a32" stroke-width="1.05" opacity="0.8"/>
<line x1="828.6" y1="572.3" x2="874.0" y2="667.6" stroke="#1f2a32" stroke-width="1.05" opacity="0.8"/>
<line x1="846.7" y1="561.7" x2="889.0" y2="658.2" stroke="#1f2a32" stroke-width="1.05" opacity="0.8"/>
<line x1="864.8" y1="551.4" x2="902.6" y2="647.1" stroke="#1f2a32" stroke-width="1.05" opacity="0.8"/>
<line x1="884.5" y1="544.3" x2="914.9" y2="634.3" stroke="#1f2a32" stroke-width="1.05" opacity="0.8"/>
<line x1="904.3" y1="545.6" x2="930.9" y2="628.6" stroke="#1f2a32" stroke-width="1.05" opacity="0.8"/>
<line x1="919.4" y1="559.6" x2="948.4" y2="626.6" stroke="#1f2a32" stroke-width="1.05" opacity="0.8"/>
<line x1="940.0" y1="558.8" x2="963.2" y2="634.5" stroke="#1f2a32" stroke-width="1.05" opacity="0.8"/>
<line x1="960.8" y1="556.5" x2="974.4" y2="648.2" stroke="#1f2a32" stroke-width="1.05" opacity="0.8"/>
<line x1="981.4" y1="552.8" x2="987.8" y2="653.5" stroke="#1f2a32" stroke-width="1.05" opacity="0.8"/>
<line x1="1001.1" y1="546.7" x2="1003.5" y2="645.4" stroke="#1f2a32" stroke-width="1.05" opacity="0.8"/>
<line x1="1017.5" y1="533.7" x2="1019.4" y2="637.7" stroke="#1f2a32" stroke-width="1.05" opacity="0.8"/>
<line x1="1033.8" y1="520.7" x2="1036.0" y2="631.6" stroke="#1f2a32" stroke-width="1.05" opacity="0.8"/>
<line x1="1050.6" y1="508.3" x2="1052.6" y2="625.5" stroke="#1f2a32" stroke-width="1.05" opacity="0.8"/>
<line x1="1070.5" y1="502.6" x2="1069.2" y2="619.4" stroke="#1f2a32" stroke-width="1.05" opacity="0.8"/>
<line x1="1091.2" y1="504.8" x2="1085.7" y2="613.0" stroke="#1f2a32" stroke-width="1.05" opacity="0.8"/>
<line x1="1111.8" y1="508.2" x2="1101.2" y2="604.4" stroke="#1f2a32" stroke-width="1.05" opacity="0.8"/>
<line x1="1132.3" y1="512.4" x2="1116.7" y2="595.9" stroke="#1f2a32" stroke-width="1.05" opacity="0.8"/>
<line x1="1151.9" y1="519.4" x2="1133.5" y2="590.7" stroke="#1f2a32" stroke-width="1.05" opacity="0.8"/>
<line x1="1169.3" y1="530.7" x2="1150.8" y2="587.4" stroke="#1f2a32" stroke-width="1.05" opacity="0.8"/>
<line x1="1184.5" y1="545.0" x2="1168.3" y2="590.5" stroke="#1f2a32" stroke-width="1.05" opacity="0.8"/>
<line x1="1197.1" y1="561.7" x2="1185.5" y2="594.4" stroke="#1f2a32" stroke-width="1.05" opacity="0.8"/>
<line x1="1209.2" y1="578.7" x2="1201.8" y2="601.2" stroke="#1f2a32" stroke-width="1.05" opacity="0.8"/>
<line x1="1220.8" y1="596.1" x2="1217.7" y2="608.8" stroke="#1f2a32" stroke-width="1.05" opacity="0.8"/>
<line x1="1233.0" y1="613.1" x2="1230.2" y2="621.2" stroke="#1f2a32" stroke-width="1.05" opacity="0.8"/>
<line x1="1244.0" y1="630.8" x2="1242.7" y2="633.7" stroke="#1f2a32" stroke-width="1.05" opacity="0.8"/>
<line x1="725.6" y1="616.1" x2="762.9" y2="621.1" stroke="#1d3f4e" stroke-width="0.9"/>
<line x1="747.2" y1="603.9" x2="779.9" y2="606.3" stroke="#1d3f4e" stroke-width="0.9"/>
<line x1="767.5" y1="589.5" x2="798.3" y2="593.3" stroke="#1d3f4e" stroke-width="0.9"/>
<line x1="788.9" y1="576.5" x2="816.7" y2="580.2" stroke="#1d3f4e" stroke-width="0.9"/>
<line x1="810.3" y1="563.8" x2="835.7" y2="568.2" stroke="#1d3f4e" stroke-width="0.9"/>
<line x1="831.9" y1="551.2" x2="855.2" y2="556.8" stroke="#1d3f4e" stroke-width="0.9"/>
<line x1="853.5" y1="538.7" x2="875.5" y2="547.4" stroke="#1d3f4e" stroke-width="0.9"/>
<line x1="875.7" y1="527.2" x2="896.7" y2="542.2" stroke="#1d3f4e" stroke-width="0.9"/>
<line x1="899.2" y1="531.1" x2="914.6" y2="554.6" stroke="#1d3f4e" stroke-width="0.9"/>
<line x1="920.1" y1="542.4" x2="933.7" y2="559.5" stroke="#1d3f4e" stroke-width="0.9"/>
<line x1="944.9" y1="539.2" x2="956.1" y2="557.2" stroke="#1d3f4e" stroke-width="0.9"/>
<line x1="969.5" y1="535.2" x2="978.4" y2="553.3" stroke="#1d3f4e" stroke-width="0.9"/>
<line x1="993.6" y1="528.9" x2="999.8" y2="547.8" stroke="#1d3f4e" stroke-width="0.9"/>
<line x1="1016.2" y1="518.4" x2="1017.5" y2="533.7" stroke="#1d3f4e" stroke-width="0.9"/>
<line x1="1034.0" y1="501.0" x2="1035.1" y2="519.7" stroke="#1d3f4e" stroke-width="0.9"/>
<line x1="1054.3" y1="488.7" x2="1053.2" y2="506.3" stroke="#1d3f4e" stroke-width="0.9"/>
<line x1="1079.0" y1="486.9" x2="1075.1" y2="502.2" stroke="#1d3f4e" stroke-width="0.9"/>
<line x1="1103.6" y1="491.2" x2="1097.3" y2="505.8" stroke="#1d3f4e" stroke-width="0.9"/>
<line x1="1127.5" y1="498.3" x2="1119.5" y2="509.8" stroke="#1d3f4e" stroke-width="0.9"/>
<line x1="1150.1" y1="508.4" x2="1141.5" y2="514.7" stroke="#1d3f4e" stroke-width="0.9"/>
<line x1="834.5" y1="720.5" x2="820.4" y2="701.7" stroke="#1d3f4e" stroke-width="0.9"/>
<line x1="852.8" y1="706.3" x2="841.0" y2="687.6" stroke="#1d3f4e" stroke-width="0.9"/>
<line x1="872.0" y1="693.1" x2="862.3" y2="674.7" stroke="#1d3f4e" stroke-width="0.9"/>
<line x1="891.6" y1="680.4" x2="883.6" y2="661.7" stroke="#1d3f4e" stroke-width="0.9"/>
<line x1="911.0" y1="667.5" x2="903.2" y2="646.5" stroke="#1d3f4e" stroke-width="0.9"/>
<line x1="928.9" y1="652.6" x2="921.1" y2="629.8" stroke="#1d3f4e" stroke-width="0.9"/>
<line x1="949.3" y1="643.9" x2="945.9" y2="626.9" stroke="#1d3f4e" stroke-width="0.9"/>
<line x1="970.8" y1="650.1" x2="966.3" y2="637.4" stroke="#1d3f4e" stroke-width="0.9"/>
<line x1="991.8" y1="659.5" x2="981.4" y2="656.8" stroke="#1d3f4e" stroke-width="0.9"/>
<line x1="1014.9" y1="661.9" x2="1003.6" y2="645.4" stroke="#1d3f4e" stroke-width="0.9"/>
<line x1="1037.3" y1="658.3" x2="1026.3" y2="635.2" stroke="#1d3f4e" stroke-width="0.9"/>
<line x1="1058.8" y1="649.3" x2="1049.7" y2="626.6" stroke="#1d3f4e" stroke-width="0.9"/>
<line x1="1080.2" y1="640.1" x2="1073.1" y2="618.0" stroke="#1d3f4e" stroke-width="0.9"/>
<line x1="1101.3" y1="630.3" x2="1095.7" y2="607.5" stroke="#1d3f4e" stroke-width="0.9"/>
<line x1="1120.2" y1="616.7" x2="1117.5" y2="595.4" stroke="#1d3f4e" stroke-width="0.9"/>
<line x1="1140.1" y1="605.7" x2="1141.5" y2="588.8" stroke="#1d3f4e" stroke-width="0.9"/>
<line x1="1162.9" y1="607.2" x2="1165.9" y2="590.1" stroke="#1d3f4e" stroke-width="0.9"/>
<line x1="1185.2" y1="613.7" x2="1190.0" y2="596.3" stroke="#1d3f4e" stroke-width="0.9"/>
<line x1="1207.1" y1="621.5" x2="1213.0" y2="605.8" stroke="#1d3f4e" stroke-width="0.9"/>
<line x1="1228.2" y1="631.6" x2="1231.4" y2="622.4" stroke="#1d3f4e" stroke-width="0.9"/>
<polygon points="1170.0,523.0 1171.9,524.7 1173.8,526.3 1175.8,528.0 1177.7,529.7 1179.6,531.3 1181.5,533.0 1183.4,534.7 1185.1,536.6 1186.6,538.6 1188.0,540.7 1189.4,542.8 1190.8,544.9 1192.2,547.1 1193.6,549.2 1195.0,551.3 1196.3,553.4 1197.8,555.6 1199.2,557.7 1200.6,559.7 1202.1,561.8 1203.6,563.9 1205.0,566.0 1206.5,568.1 1208.0,570.1 1209.4,572.2 1210.9,574.3 1212.4,576.4 1213.8,578.4 1215.3,580.5 1216.8,582.6 1218.2,584.7 1219.7,586.7 1221.1,588.8 1222.5,591.0 1223.7,593.2 1225.0,595.4 1226.2,597.6 1227.4,599.9 1228.6,602.1 1229.9,604.3 1231.1,606.5 1232.3,608.8 1233.5,611.0 1234.8,613.2 1236.0,615.4 1237.2,617.7 1238.4,619.9 1239.7,622.1 1240.9,624.4 1242.1,626.6 1243.3,628.8 1244.3,631.2 1245.2,633.5 1246.0,635.9 1246.8,638.4 1247.6,640.8 1248.4,643.2 1249.2,645.6 1250.0,648.0 1277.0,648.0 1278.4,645.8 1279.9,643.7 1281.2,641.5 1282.1,639.2 1282.4,636.8 1282.0,634.3 1281.6,631.8 1281.0,629.2 1280.5,626.7 1279.6,624.4 1278.2,622.3 1276.5,620.4 1274.7,618.5 1272.9,616.6 1271.1,614.7 1269.4,612.8 1267.6,611.0 1265.8,609.1 1264.0,607.2 1262.2,605.3 1260.5,603.4 1258.8,601.4 1257.4,599.3 1256.0,597.1 1254.6,594.9 1253.3,592.7 1251.9,590.4 1250.6,588.2 1249.2,586.0 1247.9,583.8 1246.5,581.6 1245.1,579.4 1243.8,577.2 1242.4,574.9 1241.1,572.7 1239.7,570.5 1238.4,568.3 1237.0,566.1 1235.7,563.9 1234.3,561.7 1233.0,559.5 1231.6,557.2 1230.2,555.0 1228.9,552.8 1227.6,550.6 1226.2,548.4 1224.9,546.1 1223.5,543.9 1222.2,541.7 1220.9,539.5 1219.5,537.2 1218.2,535.0 1216.9,532.8 1215.5,530.6 1214.0,528.5 1212.1,526.7 1210.1,525.1 1208.1,523.6 1206.0,522.0" fill="#5bcae3" stroke="#1d3f4e" stroke-width="1"/>
<path d="M1190 544L1221 542" stroke="#1d3f4e" stroke-width="1.2"/><path d="M1192 546L1221 544" stroke="#8fdcef" stroke-width="1"/>
<path d="M1199 559L1233 557" stroke="#1d3f4e" stroke-width="1.2"/><path d="M1201 561L1233 559" stroke="#8fdcef" stroke-width="1"/>
<path d="M1208 574L1245 572" stroke="#1d3f4e" stroke-width="1.2"/><path d="M1210 576L1245 574" stroke="#8fdcef" stroke-width="1"/>
<path d="M1220 589L1254 587" stroke="#1d3f4e" stroke-width="1.2"/><path d="M1222 591L1254 589" stroke="#8fdcef" stroke-width="1"/>
<path d="M1229 604L1261 602" stroke="#1d3f4e" stroke-width="1.2"/><path d="M1231 606L1261 604" stroke="#8fdcef" stroke-width="1"/>
<path d="M1236 618L1271 616" stroke="#1d3f4e" stroke-width="1.2"/><path d="M1238 620L1271 618" stroke="#8fdcef" stroke-width="1"/>
<path d="M1244 632L1279 630" stroke="#1d3f4e" stroke-width="1.2"/><path d="M1246 634L1279 632" stroke="#8fdcef" stroke-width="1"/>
<polygon points="1250.0,648.0 1277.0,648.0 1283.0,655.0 1276.0,662.0 1251.0,665.0" fill="#48a9c2" stroke="#1d3f4e" stroke-width="0.8"/>
<line x1="781.5" y1="722" x2="770" y2="795" stroke="#9fc4d0" stroke-width="0.9" opacity="0.6"/>
<path d="M1088 489l2-9 2 9" stroke="#9aa0a6" fill="none" stroke-width="1"/>
</g></svg><!--/MODEL-->
<!--ICONS--><svg class="a" style="left:0;top:0" width="1728" height="181" viewBox="0 0 1728 181">
<defs>
<linearGradient id="gb" x1="0" y1="0" x2="0" y2="1"><stop offset="0" stop-color="#d8f4fc"/><stop offset="1" stop-color="#6cc6e6"/></linearGradient>
<linearGradient id="gb2" x1="0" y1="0" x2="1" y2="0"><stop offset="0" stop-color="#b8e6f6"/><stop offset="0.5" stop-color="#e4f7fd"/><stop offset="1" stop-color="#6ab8dc"/></linearGradient>
<linearGradient id="gg" x1="0" y1="0" x2="0" y2="1"><stop offset="0" stop-color="#e6fbe0"/><stop offset="1" stop-color="#c4f0bc"/></linearGradient>
<linearGradient id="gy" x1="0" y1="0" x2="0" y2="1"><stop offset="0" stop-color="#f8ecc0"/><stop offset="1" stop-color="#e2c880"/></linearGradient>
</defs>
<path d="M-2 25.5h6l3.5 3.5v13h-9.5z" fill="#f4f6f6" stroke="#9aa0a0"/>
<path d="M15 29.5h5l2 2h8v10h-15z" fill="#e9d9a0" stroke="#b8a878"/><path d="M16 34.5h15l-2 7.5h-14z" fill="url(#gy)" stroke="#a89868"/><path d="M24 30l5-4m0 0h-3m3 0v3" stroke="#222" stroke-width="1.6" fill="none"/>
<rect x="39.5" y="25.5" width="17" height="17" fill="#eef0f0" stroke="#9aa0a0"/><rect x="42" y="27" width="12" height="7" fill="#fafafa" stroke="#c4c8c8"/><rect x="43" y="36" width="10" height="6" fill="#6b6f70"/><rect x="46" y="37" width="4" height="5" fill="#e4e6e6"/>
<path d="M66 36a5 4 0 1 1 4 3" fill="none" stroke="#7b8282" stroke-width="2.2"/><path d="M64 31v6h6z" fill="#7b8282"/>
<path d="M86 32.5h8l-4 4.5z" fill="#8a9191"/>
<path d="M115 36a5 4 0 1 0 -4 3" fill="none" stroke="#7b8282" stroke-width="2.2"/><path d="M117 31v6h-6z" fill="#7b8282"/>
<path d="M124 32.5h8l-4 4.5z" fill="#8a9191"/>
<rect x="138.5" y="27.5" width="4" height="3.5" fill="#e6eaea" stroke="#444"/><rect x="138.5" y="33" width="4" height="3.5" fill="#e6eaea" stroke="#444"/><rect x="138.5" y="38.5" width="4" height="3.5" fill="#e6eaea" stroke="#444"/><path d="M144 34.5h11m-11 2h11m-11 3h11" stroke="#ddd" stroke-width="1.3"/><path d="M146 30l7-4m-2 0h2v2m-7 4l-2 2" stroke="#1c5d86" stroke-width="1.8" fill="none"/>
<rect x="162.5" y="26.5" width="13" height="14" fill="#e8ecec" stroke="#9aa0a0"/><rect x="167.5" y="31.5" width="11" height="9" fill="#bfe6f4" stroke="#3a5a6a"/><rect x="164" y="29" width="6" height="3" fill="#fff" stroke="#888" stroke-width=".6"/>
<path d="M185.5 32.5h8l-4 4.5z" fill="none" stroke="#d8dddd"/>
<path d="M205 29.5l11 10m0-10l-11 10" stroke="#2c3030" stroke-width="4.2"/><path d="M205 29.5l11 10m0-10l-11 10" stroke="#f6f8f8" stroke-width="2.4"/>
<path d="M229 31h9" stroke="#e8ecec" stroke-width="1.2"/><path d="M229.5 33.5h8l-4 4.5z" fill="none" stroke="#e8ecec"/>
<path d="M69 87h20.5l-8 19h-20.5z" fill="#f2f0e6" stroke="#6f6450" stroke-width="2"/>
<path d="M111 81.5l-7 16" stroke="#55595b" stroke-width="1.6" stroke-dasharray="3,2"/>
<path d="M102.5 109.5l4 4m0-4l-4 4" stroke="#55595b" stroke-width="1.2"/>
<path d="M110.4 111.3l4 4m0-4l-4 4" stroke="#55595b" stroke-width="1.2"/>
<path d="M100.4 117.7l4 4m0-4l-4 4" stroke="#55595b" stroke-width="1.2"/>
<path d="M105.2 135v9.5h10m-10 0l-4.5 4.8" stroke="#55595b" stroke-width="1.3" fill="none"/><path d="M103.5 137l1.7-3 1.7 3zm11 6l3 1.5-3 1.5zm-12.5 4.5l-2 2.5 3-1z" fill="#55595b"/>
<rect x="231.9" y="83.7" width="1.3" height="1.3" fill="#555"/>
<rect x="231.9" y="91.80000000000001" width="1.3" height="1.3" fill="#555"/>
<rect x="231.9" y="99.9" width="1.3" height="1.3" fill="#555"/>
<rect x="231.9" y="107.7" width="1.3" height="1.3" fill="#555"/>
<rect x="240.0" y="83.7" width="1.3" height="1.3" fill="#555"/>
<rect x="240.0" y="91.80000000000001" width="1.3" height="1.3" fill="#555"/>
<rect x="240.0" y="99.9" width="1.3" height="1.3" fill="#555"/>
<rect x="240.0" y="107.7" width="1.3" height="1.3" fill="#555"/>
<rect x="247.9" y="83.7" width="1.3" height="1.3" fill="#555"/>
<rect x="247.9" y="91.80000000000001" width="1.3" height="1.3" fill="#555"/>
<rect x="247.9" y="99.9" width="1.3" height="1.3" fill="#555"/>
<rect x="247.9" y="107.7" width="1.3" height="1.3" fill="#555"/>
<rect x="255.9" y="83.7" width="1.3" height="1.3" fill="#555"/>
<rect x="255.9" y="91.80000000000001" width="1.3" height="1.3" fill="#555"/>
<rect x="255.9" y="99.9" width="1.3" height="1.3" fill="#555"/>
<rect x="255.9" y="107.7" width="1.3" height="1.3" fill="#555"/>
<path d="M232.4 93.4C235 88.5 238 86.5 240.5 88c2.5 1.5 3.5 9 6 13.5 2 3 5.5 4.5 10-1.5" fill="none" stroke="#5e9aa4" stroke-width="1.8"/>
<path d="M319 86.5h14l8 7.5v15l-3 1.5h-23l-6-6v-8z" fill="url(#gb)" stroke="#3b7890"/><path d="M309.5 100.5h15" stroke="#1d5a72" stroke-width="1.2"/>
<rect x="323.5" y="96.5" width="15" height="14" fill="#fff" stroke="#9aa"/><path d="M338.5 96.5l2.5-2.5v15l-2.5 1.5z" fill="#b4b8c8"/>
<rect x="326" y="99" width="1.7" height="1.7" fill="#222"/>
<rect x="326" y="103" width="1.7" height="1.7" fill="#222"/>
<rect x="326" y="107" width="1.7" height="1.7" fill="#222"/>
<rect x="330" y="99" width="1.7" height="1.7" fill="#222"/>
<rect x="330" y="103" width="1.7" height="1.7" fill="#222"/>
<rect x="330" y="107" width="1.7" height="1.7" fill="#222"/>
<rect x="334" y="99" width="1.7" height="1.7" fill="#222"/>
<rect x="334" y="103" width="1.7" height="1.7" fill="#222"/>
<rect x="334" y="107" width="1.7" height="1.7" fill="#222"/>
<path d="M371.5 103.5l7-7h24l-7 7z" fill="#e6fae0" stroke="#668a60"/><rect x="371.5" y="103.5" width="24" height="9.5" fill="#c9f2c0" stroke="#668a60"/><path d="M395.5 103.5l7-7v9.5l-7 7z" fill="#b4e4aa" stroke="#668a60"/>
<path d="M396 82h5l-5.5 6.5h5l-12 11 5-8.5h-4.5z" fill="#2f3233"/>
<path d="M455 85h8l4 4v4l-3 3h-10l-2-3v-4z" fill="url(#gb)" stroke="#3b7890"/><path d="M452 91.5h14" stroke="#1d5a72"/>
<path d="M451 81.5h3m-3 0v3m16-3h-3m3 0v3m-16 12.5h3m-3 0v-3m16 3h-3m3 0v-3" stroke="#222" stroke-width="1.6"/><path d="M455 81.5h9m-9 15h9" stroke="#555" stroke-dasharray="1,1"/>
<rect x="452.5" y="108.5" width="15" height="15" fill="#f6f6f6" stroke="#c8cbcc"/><path d="M455 111h3m3 0h3m-9 5h3m3 0h3m-9 2h3m3 0h3" stroke="#b8bbbc" stroke-width="1.5"/>
<path d="M452.5 140.5h11v9.5h-11z" fill="#9ad8ee" stroke="#2b6a80"/><path d="M463.5 140.5l3-3v9l-3 3z" fill="#6ab4d0" stroke="#2b6a80"/><path d="M452 140l3-4 3 4 3-4m1 0h6m-2 5h2" stroke="#333" fill="none" stroke-width="1"/>
<path d="M573.5 88.5h14l7.5 7v5.2l-6.2 5.8h-21.5l-4.2-4.4v-3.3z" fill="url(#gb)" stroke="#1f6078"/><path d="M563 100.5h31.5m-7-12.3l7 7" stroke="#1a5068" stroke-width="1.2"/>
<path d="M617.3 96.5h9.2M617.3 85v11.5m9.2-11.5v11.5" stroke="#1f4050" stroke-width="1.2" fill="none"/><path d="M617.3 81l-3.5 5h7zm9.2 0l-3.5 5h7z" fill="#4aa0c8" stroke="#1f4a60" stroke-width=".8"/><path d="M616.5 86h1.6v7h-1.6zm9.2 0h1.6v7h-1.6z" fill="#4aa0c8"/>
<path d="M616 124h8l6-6m-14 4l4-4m0 0v-9l3-2v9" stroke="#c3c6c8" fill="none"/>
<path d="M728.5 92c8-6 18-6 30-2v19c-12-4-22-4-30 2z" fill="url(#gb2)" stroke="#3f86a8"/>
<path d="M781.5 88l6-6h24l-6 6z" fill="#eafbe4" stroke="#6c8a64"/><rect x="781.5" y="88" width="24" height="24" fill="#cdf3c4" stroke="#6c8a64"/><path d="M805.5 88l6-6v24l-6 6z" fill="#b4e0a8" stroke="#6c8a64"/><path d="M785.5 104v-6c0-2.5 2-4 4-4h8c2 0 4 1.5 4 4v6h-3v-4c0-1.5-1-2-2-2h-6c-1 0-2 .5-2 2v4z" fill="#fff" stroke="#222" stroke-width="1.1"/>
<path d="M832.5 95.5l4.5-4.5h12v-5l5-5h10v26l-5 5h-10v-8h-12l-4.5 4.5z" fill="#bfe8f6" stroke="#3a88aa"/><path d="M849 86h10v26h-10z" fill="#9ed8f0" stroke="#3a88aa"/><path d="M859 86l5-5v26l-5 5z" fill="#6cb8d8" stroke="#3a88aa"/>
<path d="M882 97v-9l3-3h8l3-3h2v10l-3 3v2h-10z" fill="#f2f2f2" stroke="#c6c9ca"/><path d="M885 97v-9m4 9v-9m4 0l3-3" stroke="#c6c9ca"/>
<rect x="881.5" y="110.5" width="11" height="13" fill="#f4f4f4" stroke="#c6c9ca"/><path d="M884 114h6m-6 3h6m-6 3h6m-3-11l3 3 3-3 3 3" stroke="#c0c3c4" fill="none"/>
<path d="M995 90.5l3-3h23v10h-26z" fill="#f0f0f0" stroke="#c8cbcc"/><path d="M1000 102l3-3h23v10l-3 3h-23z" fill="#e2e3e4" stroke="#c8cbcc"/><path d="M1011 81.5h2v19" stroke="#b8bbbc" stroke-width="2"/><path d="M1008 99h8l-4 4z" fill="#b0b3b4"/>
<path d="M1056 86c0-3 2-5 4-5s4 2 5 4v3h-9z" fill="#6ec0dc" stroke="#2b6a80"/><path d="M1061 92c0-2 2-3 4-3s4 1 5 3v2h-9z" fill="#6ec0dc" stroke="#2b6a80"/><path d="M1058 88l-3 8 6-2" stroke="#1f3a48" fill="none"/>
<rect x="1057.5" y="109.5" width="12" height="14" fill="#cfeaf4" stroke="#2b6070"/><path d="M1060 112h7m-3.5 0v9" stroke="#1f5068" stroke-width="2"/><path d="M1055 111c1 0 2 1 2 2m-2 2c1 0 2 1 2 2m-2 2c1 0 2 1 2 2" stroke="#333" fill="none" stroke-width=".8"/>
<path d="M1172.5 84h15m-15 4h15m-15 4h15" stroke="#1f5a78" stroke-width="1.3"/><path d="M1174 85a2 2 0 0 1 4 0m2 0a2 2 0 0 1 4 0m-10 4.5a2 2 0 0 0 4 0m2 0a2 2 0 0 0 4 0" stroke="#3a8fb0" fill="#b8e6f4"/><path d="M1172 95h16" stroke="#1f7aa0" stroke-width="1.5"/>
<path d="M1173 109l5 5-5 5m14-10l-5 5 5 5m-9-9h4m-4 8h4m-2-6v4" stroke="#2a2e30" stroke-width="1.3" fill="none"/><circle cx="1180" cy="116" r="2" fill="#2a2e30"/>
<path d="M1172.5 142h15m-15 3h15" stroke="#3a8fb0" stroke-width="1.1"/><rect x="1177.5" y="135" width="5" height="8" rx="2" fill="#bbb" stroke="#777"/><path d="M1180 145v5" stroke="#3a8fb0" stroke-dasharray="1,1"/>
<path d="M1307.5 105l5-5h26l-5 5z" fill="#ecfbe6" stroke="#6c8a64"/><rect x="1307.5" y="105" width="26" height="6" fill="#cdf3c4" stroke="#6c8a64"/><path d="M1333.5 105l5-5v6l-5 5z" fill="#b4e0a8" stroke="#6c8a64"/>
<path d="M1317 93h9l4 3.5v3l-3 3h-11l-2.5-3v-3z" fill="url(#gb)" stroke="#2b6a80"/><path d="M1313.5 99.5h16" stroke="#1d5a72"/>
<path d="M1307.5 87l5-5h26l-5 5z" fill="#ecfbe6" stroke="#6c8a64"/><rect x="1307.5" y="87" width="26" height="5" fill="#cdf3c4" stroke="#6c8a64"/><path d="M1333.5 87l5-5v5l-5 5z" fill="#b4e0a8" stroke="#6c8a64"/>
<path d="M1354 82h4m-4 2h4m-4 2h4m1-4h3v4h-3zm4 0v4m4-4v4m-4-2h4" stroke="#222" stroke-width=".8" fill="none"/><path d="M1355 89h3v3h7v-3h4v5h-14z" fill="#bfe4f0" stroke="#1f4050"/><path d="M1354 96.5h16" stroke="#555" stroke-dasharray="1,1"/>
<path d="M1357 114c0-2 2-3 5-3s5 1 5 3z" fill="#ddd" stroke="#888"/><path d="M1356 118h13l-2 3h-13z" fill="#6ec0e0" stroke="#1f5a78"/><path d="M1354 123.5h16" stroke="#555" stroke-dasharray="1,1"/>
<path d="M1356 146h12l-4-9h-3z" fill="#9ad8ee" stroke="#1f5068"/><path d="M1354 141h6" stroke="#ccc"/><path d="M1354 150.5h16" stroke="#555" stroke-dasharray="1,1"/>
<path d="M1472 87h24l3-4h-24z" fill="#f4f4f4" stroke="#9aa"/><rect x="1474.5" y="88" width="18" height="18" fill="#8fd0ea" stroke="#3a88aa"/><path d="M1474.5 94h18m-18 5h18" stroke="#3a88aa"/><rect x="1479" y="100" width="8" height="6" fill="#2d6a80"/><path d="M1492.5 88l3-3v20l-3 3z" fill="#6cb8d8"/><path d="M1469 109h27l4-4h-27z" fill="#dde0e2" stroke="#9aa"/><rect x="1469" y="109" width="27" height="3" fill="#c8ccd0" stroke="#9aa"/>
<circle cx="1474" cy="87" r="5" fill="#fff" stroke="#222" stroke-width="1.1"/><path d="M1472.5 84.5l4 2.5-4 2.5z" fill="#222"/>
</svg><!--/ICONS-->
<!--CHROME--><div class="t " style="left:782px;top:26.5px;font-size:13px;line-height:16px;color:#c9cece">LWMD-01 - Creo Parametric</div>
<div class="a" style="left:222px;top:22px;width:1px;height:24px;background:#7a8282"></div>
<div class="a" style="left:0;top:48px;width:41px;height:27px;background:#eceeef"></div>
<div class="t " style="left:-12px;top:54.1px;font-size:13px;line-height:16px;color:#526e56">Mold</div>
<div class="t " style="left:63px;top:54.5px;font-size:13px;line-height:16px;color:#f0f2f2">Analysis</div>
<div class="t " style="left:157px;top:54.5px;font-size:13px;line-height:16px;color:#f0f2f2">Model</div>
<div class="t " style="left:242px;top:54.5px;font-size:13px;line-height:16px;color:#f0f2f2">Annotate</div>
<div class="t " style="left:341px;top:54.5px;font-size:13px;line-height:16px;color:#f0f2f2">Tools</div>
<div class="t " style="left:418px;top:54.5px;font-size:13px;line-height:16px;color:#f0f2f2">View</div>
<div class="t " style="left:492px;top:54.5px;font-size:13px;line-height:16px;color:#f0f2f2">Applications</div>
<div class="t " style="left:611px;top:54.5px;font-size:13px;line-height:16px;color:#f0f2f2">KeyShot 10</div>
<div class="t " style="left:723px;top:54.5px;font-size:13px;line-height:16px;color:#f0f2f2">KeyShot 11</div>
<div class="a" style="left:1716px;top:56px;width:0;height:0;border-left:12px solid transparent;border-bottom:7px solid #fff"></div>
<div class="t g" style="left:-2px;top:83.4px;font-size:12px;line-height:14px">Copy</div>
<div class="t g" style="left:-3px;top:109.4px;font-size:12px;line-height:14px">Paste</div>
<div class="a" style="left:32.0px;top:115px;width:0;height:0;border-left:4.0px solid transparent;border-right:4.0px solid transparent;border-top:4.5px solid #b0b3b5"></div>
<div class="t g" style="left:-3px;top:135.3px;font-size:12px;line-height:14px">Delete</div>
<div class="a" style="left:37.0px;top:141px;width:0;height:0;border-left:4.0px solid transparent;border-right:4.0px solid transparent;border-top:4.5px solid #b0b3b5"></div>
<div class="a" style="left:2.0px;top:167px;width:0;height:0;border-left:4.0px solid transparent;border-right:4.0px solid transparent;border-top:4.5px solid #444849"></div>
<div class="a" style="left:52px;top:76px;width:1px;height:103px;background:#c6c9ca"></div>
<div class="t " style="left:61px;top:123.4px;font-size:12px;line-height:14px">Plane</div>
<div class="t " style="left:120px;top:83.4px;font-size:12px;line-height:14px">Axis</div>
<div class="t " style="left:120px;top:109.4px;font-size:12px;line-height:14px">Point</div>
<div class="a" style="left:155.0px;top:115px;width:0;height:0;border-left:4.0px solid transparent;border-right:4.0px solid transparent;border-top:4.5px solid #9a9ea0"></div>
<div class="t " style="left:120px;top:135.3px;font-size:12px;line-height:14px">Coordinate System</div>
<div class="t " style="left:228px;top:123.4px;font-size:12px;line-height:14px">Sketch</div>
<div class="t " style="left:138px;top:163.3px;font-size:12px;line-height:14px">Datum</div>
<div class="a" style="left:177.0px;top:167px;width:0;height:0;border-left:4.0px solid transparent;border-right:4.0px solid transparent;border-top:4.5px solid #444849"></div>
<div class="a" style="left:270px;top:76px;width:1px;height:103px;background:#c6c9ca"></div>
<div class="t g" style="left:299px;top:123.4px;font-size:12px;line-height:14px">Reference</div>
<div class="t g" style="left:303px;top:137.8px;font-size:12px;line-height:14px">Model</div>
<div class="a" style="left:340.0px;top:142px;width:0;height:0;border-left:4.0px solid transparent;border-right:4.0px solid transparent;border-top:4.5px solid #b0b3b5"></div>
<div class="t g" style="left:359px;top:123.4px;font-size:12px;line-height:14px">Workpiece</div>
<div class="a" style="left:382.0px;top:142px;width:0;height:0;border-left:4.0px solid transparent;border-right:4.0px solid transparent;border-top:4.5px solid #b0b3b5"></div>
<div class="t " style="left:278px;top:163.3px;font-size:12px;line-height:14px">Reference Model &amp; Workpiece</div>
<div class="a" style="left:444px;top:76px;width:1px;height:103px;background:#c6c9ca"></div>
<div class="t " style="left:472px;top:83.4px;font-size:12px;line-height:14px">Shrinkage</div>
<div class="a" style="left:530.0px;top:88px;width:0;height:0;border-left:4.0px solid transparent;border-right:4.0px solid transparent;border-top:4.5px solid #b0b3b5"></div>
<div class="t g" style="left:472px;top:109.4px;font-size:12px;line-height:14px">Pattern</div>
<div class="a" style="left:516.0px;top:115px;width:0;height:0;border-left:4.0px solid transparent;border-right:4.0px solid transparent;border-top:4.5px solid #b0b3b5"></div>
<div class="t " style="left:472px;top:135.3px;font-size:12px;line-height:14px">Classify</div>
<div class="t " style="left:471px;top:163.3px;font-size:12px;line-height:14px">Modifiers</div>
<div class="a" style="left:545px;top:76px;width:1px;height:103px;background:#c6c9ca"></div>
<div class="t " style="left:553px;top:123.4px;font-size:12px;line-height:14px">Silhouette</div>
<div class="t " style="left:564px;top:137.8px;font-size:12px;line-height:14px">Curve</div>
<div class="t " style="left:634px;top:83.4px;font-size:12px;line-height:14px">Pull Direction</div>
<div class="t g" style="left:634px;top:109.4px;font-size:12px;line-height:14px">Draft Line</div>
<div class="t " style="left:588px;top:163.3px;font-size:12px;line-height:14px">Design Features</div>
<div class="a" style="left:712px;top:76px;width:1px;height:103px;background:#c6c9ca"></div>
<div class="t g" style="left:725px;top:123.4px;font-size:12px;line-height:14px">Parting</div>
<div class="t g" style="left:720px;top:137.8px;font-size:12px;line-height:14px">Surface</div>
<div class="a" style="left:761.0px;top:142px;width:0;height:0;border-left:4.0px solid transparent;border-right:4.0px solid transparent;border-top:4.5px solid #b0b3b5"></div>
<div class="t " style="left:777px;top:123.4px;font-size:12px;line-height:14px">Refpart</div>
<div class="t " style="left:777px;top:137.8px;font-size:12px;line-height:14px">Cutout</div>
<div class="t g" style="left:834px;top:123.4px;font-size:12px;line-height:14px">Mold</div>
<div class="t g" style="left:823px;top:137.8px;font-size:12px;line-height:14px">Volume</div>
<div class="a" style="left:865.0px;top:142px;width:0;height:0;border-left:4.0px solid transparent;border-right:4.0px solid transparent;border-top:4.5px solid #b0b3b5"></div>
<div class="t g" style="left:901px;top:83.4px;font-size:12px;line-height:14px">Attach</div>
<div class="t g" style="left:901px;top:109.4px;font-size:12px;line-height:14px">Rename</div>
<div class="a" style="left:950.0px;top:115px;width:0;height:0;border-left:4.0px solid transparent;border-right:4.0px solid transparent;border-top:4.5px solid #b0b3b5"></div>
<div class="t " style="left:750px;top:163.3px;font-size:12px;line-height:14px">Parting Surface &amp; Mold Volume</div>
<div class="a" style="left:920.0px;top:167px;width:0;height:0;border-left:4.0px solid transparent;border-right:4.0px solid transparent;border-top:4.5px solid #444849"></div>
<div class="a" style="left:965px;top:76px;width:1px;height:103px;background:#c6c9ca"></div>
<div class="t g" style="left:996px;top:123.4px;font-size:12px;line-height:14px">Mold</div>
<div class="t g" style="left:973px;top:137.8px;font-size:12px;line-height:14px">Component</div>
<div class="a" style="left:1039.0px;top:142px;width:0;height:0;border-left:4.0px solid transparent;border-right:4.0px solid transparent;border-top:4.5px solid #b0b3b5"></div>
<div class="t " style="left:1075px;top:83.4px;font-size:12px;line-height:14px">Create Molding</div>
<div class="t " style="left:1075px;top:109.4px;font-size:12px;line-height:14px">Catalog</div>
<div class="t " style="left:1025px;top:163.3px;font-size:12px;line-height:14px">Components</div>
<div class="a" style="left:1097.0px;top:167px;width:0;height:0;border-left:4.0px solid transparent;border-right:4.0px solid transparent;border-top:4.5px solid #444849"></div>
<div class="a" style="left:1164px;top:76px;width:1px;height:103px;background:#c6c9ca"></div>
<div class="t " style="left:1192px;top:83.4px;font-size:12px;line-height:14px">Water Line</div>
<div class="t " style="left:1192px;top:109.4px;font-size:12px;line-height:14px">Runner</div>
<div class="t " style="left:1192px;top:135.3px;font-size:12px;line-height:14px">Trim to Geometry</div>
<div class="t " style="left:1170px;top:163.3px;font-size:12px;line-height:14px">Production Features</div>
<div class="a" style="left:1280.0px;top:167px;width:0;height:0;border-left:4.0px solid transparent;border-right:4.0px solid transparent;border-top:4.5px solid #444849"></div>
<div class="a" style="left:1292px;top:76px;width:1px;height:103px;background:#c6c9ca"></div>
<div class="t " style="left:1309px;top:123.4px;font-size:12px;line-height:14px">Mold</div>
<div class="t " style="left:1300px;top:137.8px;font-size:12px;line-height:14px">Opening</div>
<div class="t " style="left:1374px;top:83.4px;font-size:12px;line-height:14px">Thickness</div>
<div class="t " style="left:1374px;top:109.4px;font-size:12px;line-height:14px">Projected Area</div>
<div class="t " style="left:1374px;top:135.3px;font-size:12px;line-height:14px">Draft</div>
<div class="t " style="left:1349px;top:163.3px;font-size:12px;line-height:14px">Analysis</div>
<div class="a" style="left:1396.0px;top:167px;width:0;height:0;border-left:4.0px solid transparent;border-right:4.0px solid transparent;border-top:4.5px solid #444849"></div>
<div class="a" style="left:1458px;top:76px;width:1px;height:103px;background:#c6c9ca"></div>
<div class="t " style="left:1470px;top:123.4px;font-size:12px;line-height:14px">Mold</div>
<div class="t " style="left:1466px;top:137.8px;font-size:12px;line-height:14px">Layout</div>
<div class="t " style="left:1470px;top:163.3px;font-size:12px;line-height:14px">Go To</div>
<div class="a" style="left:1509px;top:76px;width:1px;height:103px;background:#c6c9ca"></div>
<div class="a" style="left:0;top:272px;width:233px;height:733px;overflow:hidden">
</div>
<div class="a" style="left:1px;top:212px;width:24px;height:24px;background:#c9cccd;border:1px solid #a4a8a9"></div>
<div class="a" style="left:29px;top:214px;width:1px;height:20px;background:#b8bcbd"></div>
<div class="a" style="left:86px;top:214px;width:1px;height:20px;background:#b8bcbd"></div>
<div class="a" style="left:0;top:239px;width:254px;height:1px;background:#8d9192"></div>
<div class="a" style="left:-1px;top:240px;width:207px;height:27px;background:#fdfdfd;border:1px solid #8d9192;border-top:none"></div>
<svg class="a" style="left:0;top:208px" width="254" height="64" viewBox="0 208 254 64">
<rect x="6.5" y="216.5" width="13" height="13" fill="#e6e8e8" stroke="#8a8e8f"/><path d="M10.5 216.5v13m5-13v13m-9 4h13" stroke="#8a8e8f"/><ellipse cx="16" cy="230" rx="3.5" ry="2" fill="#ddd" stroke="#777"/>
<rect x="39.5" y="216.5" width="3" height="3" fill="#fff" stroke="#333"/><rect x="39.5" y="223.5" width="3" height="3" fill="#9ad4a8" stroke="#333"/><rect x="39.5" y="230.5" width="3" height="3" fill="#fff" stroke="#333"/><path d="M41 219.5v4m0 3v4" stroke="#333"/><path d="M44 227h10l-3.5 4v3h-3v-3z" fill="#3a3030"/>
<rect x="63.5" y="217.5" width="13" height="13" fill="#f4f6f6" stroke="#2c6c88"/><rect x="63.5" y="217.5" width="3.5" height="13" fill="#6ec4e4" stroke="#2c6c88"/><path d="M67 221h9.5" stroke="#2c6c88"/><rect x="70.5" y="223.5" width="8" height="9" fill="#f2f2f2" stroke="#666"/><path d="M72 226.5h5m-5 2h5" stroke="#777"/>
<path d="M96 221l7-4 8 2-7 4z" fill="#bfe6f2" stroke="#333"/><path d="M96 225l7 3 8-3m-15 4l7 3 8-3" stroke="#333" fill="none"/>
<rect x="119.5" y="216.5" width="4" height="4" fill="#fff" stroke="#444"/><path d="M121.5 220.5v12" stroke="#444"/><rect x="124.5" y="222.5" width="5" height="4" fill="#bfe6f2" stroke="#2c6c88"/><path d="M129 225l6 4-3 1 2 3-1 .8-2-3-2 2z" fill="#fff" stroke="#333" stroke-width=".9"/>
<path d="M232.5 216.5h8l3 3v12h-11z" fill="#f6f6f6" stroke="#9a9e9f"/><circle cx="235" cy="222" r="1" fill="none" stroke="#666" stroke-width=".7"/><circle cx="235" cy="226" r="1" fill="none" stroke="#666" stroke-width=".7"/><path d="M237 222h4m-4 4h4" stroke="#666"/><path d="M242 232l3-3v3z" fill="#333"/>
<path d="M193 250l7 7m0-7l-7 7" stroke="#8e9294" stroke-width="1.3"/>
<path d="M211 251h8l-4 4z" fill="#45494a"/>
<path d="M236.5 247v12m-6-6h12" stroke="#9a9ea0" stroke-width="2.6"/>
</svg>
<div class="a" style="left:234px;top:272px;width:15px;height:733px;background:#dcdfe0"></div>
<div class="a" style="left:234px;top:272px;width:15px;height:15px;background:#f6f7f7;border:1px solid #cfd2d3"></div>
<div class="a" style="left:237.5px;top:277px;width:0;height:0;border-left:4px solid transparent;border-right:4px solid transparent;border-bottom:4.5px solid #8a8e90"></div>
<div class="a" style="left:234px;top:287px;width:15px;height:263px;background:#f4f5f5;border:1px solid #c7cacb"></div>
<div class="a" style="left:235px;top:991px;width:13px;height:14px;background:#f6f7f7"></div>
<div class="a" style="left:237.5px;top:996px;width:0;height:0;border-left:4px solid transparent;border-right:4px solid transparent;border-top:4.5px solid #8a8e90"></div>
<div class="a" style="left:0;top:1005px;width:233px;height:15px;background:#dcdfe0"></div>
<div class="a" style="left:0;top:1005px;width:214px;height:15px;background:#f6f7f7;border:1px solid #cfd2d3;border-left:none"></div>
<div class="a" style="left:220px;top:1005px;width:13px;height:15px;background:#f6f7f7"></div>
<div class="a" style="left:225px;top:1008.5px;width:0;height:0;border-top:4px solid transparent;border-bottom:4px solid transparent;border-left:4.5px solid #8a8e90"></div>
<div class="a" style="left:0;top:1025px;width:257px;height:1px;background:#8a8e90"></div>
<div class="t" style="left:-2px;top:275.3px;font-size:11px;line-height:12px;color:#3d4143;transform:scaleX(0.9);transform-origin:0 0">M</div>
<div class="t" style="left:0px;top:293.3px;font-size:11px;line-height:12px;color:#b4b6b4;transform:scaleX(0.9);transform-origin:0 0">·</div>
<div class="t" style="left:0px;top:311.3px;font-size:11px;line-height:12px;color:#3d4143;transform:scaleX(0.9);transform-origin:0 0">UME_1</div>
<div class="t" style="left:0px;top:329.3px;font-size:11px;line-height:12px;color:#3d4143;transform:scaleX(0.9);transform-origin:0 0">UME_2</div>
<div class="t" style="left:0px;top:347.3px;font-size:11px;line-height:12px;color:#b4b6b4;transform:scaleX(0.9);transform-origin:0 0">_SURF_2</div>
<div class="t" style="left:-3px;top:365.3px;font-size:11px;line-height:12px;color:#3d4143;transform:scaleX(0.9);transform-origin:0 0">r 19</div>
<div class="t" style="left:-3px;top:383.3px;font-size:11px;line-height:12px;color:#3d4143;transform:scaleX(0.9);transform-origin:0 0">r 20</div>
<div class="t" style="left:-1px;top:401.3px;font-size:11px;line-height:12px;color:#3d4143;transform:scaleX(0.9);transform-origin:0 0">IGHT</div>
<div class="t" style="left:-1px;top:419.3px;font-size:11px;line-height:12px;color:#3d4143;transform:scaleX(0.9);transform-origin:0 0">RTING_PLN</div>
<div class="t" style="left:-1px;top:437.3px;font-size:11px;line-height:12px;color:#3d4143;transform:scaleX(0.9);transform-origin:0 0">RONT</div>
<div class="t" style="left:-3px;top:455.3px;font-size:11px;line-height:12px;color:#3d4143;transform:scaleX(0.9);transform-origin:0 0">EF_CSYS</div>
<div class="t" style="left:0px;top:473.3px;font-size:11px;line-height:12px;color:#b4b6b4;transform:scaleX(0.9);transform-origin:0 0">1_WRK_1.PRT</div>
<div class="t" style="left:0px;top:545.3px;font-size:11px;line-height:12px;color:#3d4143;transform:scaleX(0.9);transform-origin:0 0">1_REF.PRT</div>
<div class="t" style="left:-1px;top:563.3px;font-size:11px;line-height:12px;color:#b4b6b4;transform:scaleX(0.9);transform-origin:0 0">RVE_1</div>
<div class="t" style="left:-2px;top:581.3px;font-size:11px;line-height:12px;color:#b4b6b4;transform:scaleX(0.9);transform-origin:0 0">face id 585 [PART_SURF_1 - PARTING SURFACE]</div>
<div class="t" style="left:-1px;top:599.3px;font-size:11px;line-height:12px;color:#3d4143;transform:scaleX(0.9);transform-origin:0 0">1</div>
<div class="t" style="left:-1px;top:653.3px;font-size:11px;line-height:12px;color:#3d4143;transform:scaleX(0.9);transform-origin:0 0">2</div>
<div class="t" style="left:-1px;top:689.3px;font-size:11px;line-height:12px;color:#3d4143;transform:scaleX(0.9);transform-origin:0 0">3</div>
<div class="t" style="left:4px;top:707.3px;font-size:11px;line-height:12px;color:#b4b6b4;transform:scaleX(0.9);transform-origin:0 0">1</div>
<div class="t" style="left:4px;top:725.3px;font-size:11px;line-height:12px;color:#b4b6b4;transform:scaleX(0.9);transform-origin:0 0">2</div>
<div class="t" style="left:-1px;top:923.3px;font-size:11px;line-height:12px;color:#3d4143;transform:scaleX(0.9);transform-origin:0 0">4</div>
<div class="t" style="left:-2px;top:959.3px;font-size:11px;line-height:12px;color:#3d4143;transform:scaleX(0.9);transform-origin:0 0">RT_SURF_2 - PARTING SURFACE]</div>
<div class="t" style="left:4px;top:977.3px;font-size:11px;line-height:12px;color:#b4b6b4;transform:scaleX(0.9);transform-origin:0 0">3</div>
<div class="t" style="left:4px;top:995.3px;font-size:11px;line-height:12px;color:#b4b6b4;transform:scaleX(0.9);transform-origin:0 0">4</div>
<div class="a" style="left:0;top:1026px;width:1728px;height:1px;background:#8a8e90"></div>
<div class="a" style="left:-0.5px;top:1039px;width:6px;height:6px;border-radius:3px;background:#1f5a70"></div>
<div class="t " style="left:10px;top:1035.9px;font-size:11px;line-height:14px;color:#3d4143;letter-spacing:0.18px">Assembly components have been successfully unexploded.</div>
<div class="a" style="left:1498px;top:1030px;width:1px;height:26px;background:#b4b8b9"></div>
<div class="a" style="left:1503px;top:1030px;width:1px;height:26px;background:#b4b8b9"></div>
<div class="a" style="left:1505px;top:1030px;width:45px;height:26px;border:1px solid #c8cbcc;background:#f0f1f1"></div>
<svg class="a" style="left:1510px;top:1035px" width="20" height="19"><path d="M3 2h4v4h2v-4h4v3l2 4v6h-5v-3h-4v3h-5v-6l2-4z" fill="#8e9294"/><rect x="2" y="10" width="6" height="6" rx="1" fill="#a4a8aa"/><rect x="11" y="10" width="6" height="6" rx="1" fill="#a4a8aa"/></svg>
<div class="a" style="left:1534px;top:1032px;width:14px;height:23px;background:#c9cbcc;border:1px solid #a9adae"></div>
<div class="a" style="left:1641px;top:1032px;width:90px;height:23px;background:#f5f6f6;border:1px solid #a4a8a9"></div><!--/CHROME-->
<!--VP--><div class="a" style="left:803px;top:190px;width:473px;height:30px;background:#eceeef;border-left:1px solid #d0d3d4"></div>
<svg class="a" style="left:800px;top:186px" width="480" height="40" viewBox="800 186 480 40">
<rect x="811.5" y="198.5" width="14" height="12" fill="#f6f7f7" stroke="#8c9092"/><circle cx="818" cy="204" r="4" fill="#e8f6fa" stroke="#4a4e50" stroke-width="1.2"/><path d="M821 207l4 4.5" stroke="#777" stroke-width="2"/>
<circle cx="843" cy="203" r="5" fill="#d4f0f8" stroke="#2b6a80" stroke-width="1.3"/><path d="M840.5 203h5m-2.5-2.5v5" stroke="#1f3a48" stroke-width="1.6"/><path d="M846.5 206.5l5 5" stroke="#8a8e90" stroke-width="2.2"/>
<circle cx="869" cy="203" r="5" fill="#d4f0f8" stroke="#2b6a80" stroke-width="1.3"/><path d="M866.5 203h5" stroke="#1f3a48" stroke-width="1.6"/><path d="M872.5 206.5l5 5" stroke="#8a8e90" stroke-width="2.2"/>
<rect x="890" y="198" width="15" height="14" fill="#f8f8f8" stroke="#8a9a9f"/><path d="M890 212l15-14v14z" fill="#8ccbe0"/><path d="M891 211l13-12" stroke="#222" stroke-width="1.3"/><path d="M890 198.5h15" stroke="#777" stroke-width="1.5"/>
<path d="M915.5 201.5l3-3h11v11l-3 3h-11z" fill="#f2f2f2" stroke="#9a9ea0"/><path d="M915.5 201.5h11v11m0-11l3-3" stroke="#9a9ea0" fill="none"/><path d="M927.5 213.5l2.5-2.5v2.5z" fill="#333"/>
<path d="M941 203l4-5h8l4 5v5l-4 4h-8l-4-4z" fill="#c6eaf6" stroke="#3a88aa"/><path d="M949 198v6l-8 0m8 0l8 0" stroke="#3a88aa" fill="none"/><rect x="951" y="206" width="5" height="6" fill="#f4f4f4" stroke="#555" stroke-width=".8"/><path d="M956.5 213.5l2.5-2.5v2.5z" fill="#333"/>
<rect x="967.5" y="197.5" width="13" height="13" fill="#fafafa" stroke="#9a9ea0"/><path d="M967.5 201.5h13m-13 3h13m-13 3h13m-8-10v13" stroke="#b0b4b6"/><rect x="972" y="205" width="11" height="7" rx="1" fill="#3a3e40"/><circle cx="977.5" cy="208.5" r="2" fill="#ddd"/>
<path d="M992 198l3 3m0-3l-3 3m9-3l-2 3" stroke="#4a4030" stroke-width="1.1"/><path d="M998 203v8h7m-7 0l-4 3" stroke="#555" stroke-width="1.1" fill="none"/><path d="M995 206l-1 3m8-7l-1 2" stroke="#a08a40" stroke-width="1.4"/><path d="M1006.5 213.5l2.5-2.5v2.5z" fill="#333"/>
<rect x="1019.5" y="197.5" width="9" height="6" fill="#fafafa" stroke="#666"/><path d="M1029 201h5l-2 3h2l-3 3" stroke="#444" fill="none"/><path d="M1024 210c3-3 8-3 11 0-3 3-8 3-11 0z" fill="#222"/><circle cx="1029.5" cy="210" r="1.3" fill="#fff"/>
<path d="M1046 200l3-3h12v12l-2 2c-4-2-8-2-13 0z" fill="#c4eaf6" stroke="#3a88aa"/><path d="M1059 199l2-2v12l-2 2z" fill="#6cb8d8" stroke="#3a88aa"/>
<path d="M1072 207h13l2-2v6h-15z" fill="#d6f4cc" stroke="#6c8a64"/><path d="M1075 206v-6m8 6v-6m-8 6h8" stroke="#1f4050" stroke-width="1.1" fill="none"/><path d="M1075 197l-2.5 3.5h5zm8 0l-2.5 3.5h5z" fill="#4aa0c8" stroke="#1f4a60" stroke-width=".7"/>
<path d="M1101 199l5 6-5 6m5-6h5" stroke="#555" stroke-width="1.2" fill="none"/><circle cx="1100.5" cy="198.5" r="2.5" fill="#7a9a8a"/><circle cx="1100.5" cy="211" r="2.5" fill="#6a8a7a"/><circle cx="1111.5" cy="205" r="2.5" fill="#d88a9a"/>
<path d="M1125 210c2-6 8-5 13-12-1 6-2 10-6 13-3 1-5 1-7-1z" fill="#d0d2d3"/><path d="M1137.5 213.5l2.5-2.5v2.5z" fill="#333"/>
<rect x="1149.5" y="198.5" width="15" height="11" fill="#f4f6f6" stroke="#2c6c88"/><path d="M1149.5 201h15m-15 3h15" stroke="#3a88aa" stroke-width="1.5"/><rect x="1153" y="204" width="7" height="3" fill="#2c6c88"/><path d="M1156 212c2.5-3 7-3 9.5 0-2.5 3-7 3-9.5 0z" fill="#222"/><circle cx="1160.8" cy="212" r="1.1" fill="#fff"/>
<rect x="1175" y="199" width="16" height="11" fill="#d8dadb"/><path d="M1176 200l5 3-5 3" fill="#e8e9ea"/>
<path d="M1209 198l7 13h-14z" fill="none" stroke="#b8bbbc" stroke-width="2"/><path d="M1209 203l3 5h-6z" fill="none" stroke="#c8cbcc"/>
<rect x="1228.5" y="199" width="3.5" height="12" fill="#a4a8aa"/><rect x="1235.5" y="199" width="3.5" height="12" fill="#a4a8aa"/>
<path d="M1254 212l4-13h12v12z" fill="#e4f4fa" stroke="#9ac"/><path d="M1253 213l17-16" stroke="#2a2e30" stroke-width="1.4"/><path d="M1268.5 213.5l2.5-2.5v2.5z" fill="#333"/>
</svg>
<div class="t" style="left:264px;top:918px;font-size:10.5px;line-height:12px;color:#9a9fa2;letter-spacing:-0.1px">Style State:Master Style(+)</div>
<svg class="a" style="left:1001px;top:392px" width="16" height="22"><path d="M1.5 1.5v16l4-4 3 6.5 2.5-1.2-3-6.3h5.5z" fill="#fff" stroke="#111" stroke-width="1"/></svg><!--/VP-->
</body></html>
